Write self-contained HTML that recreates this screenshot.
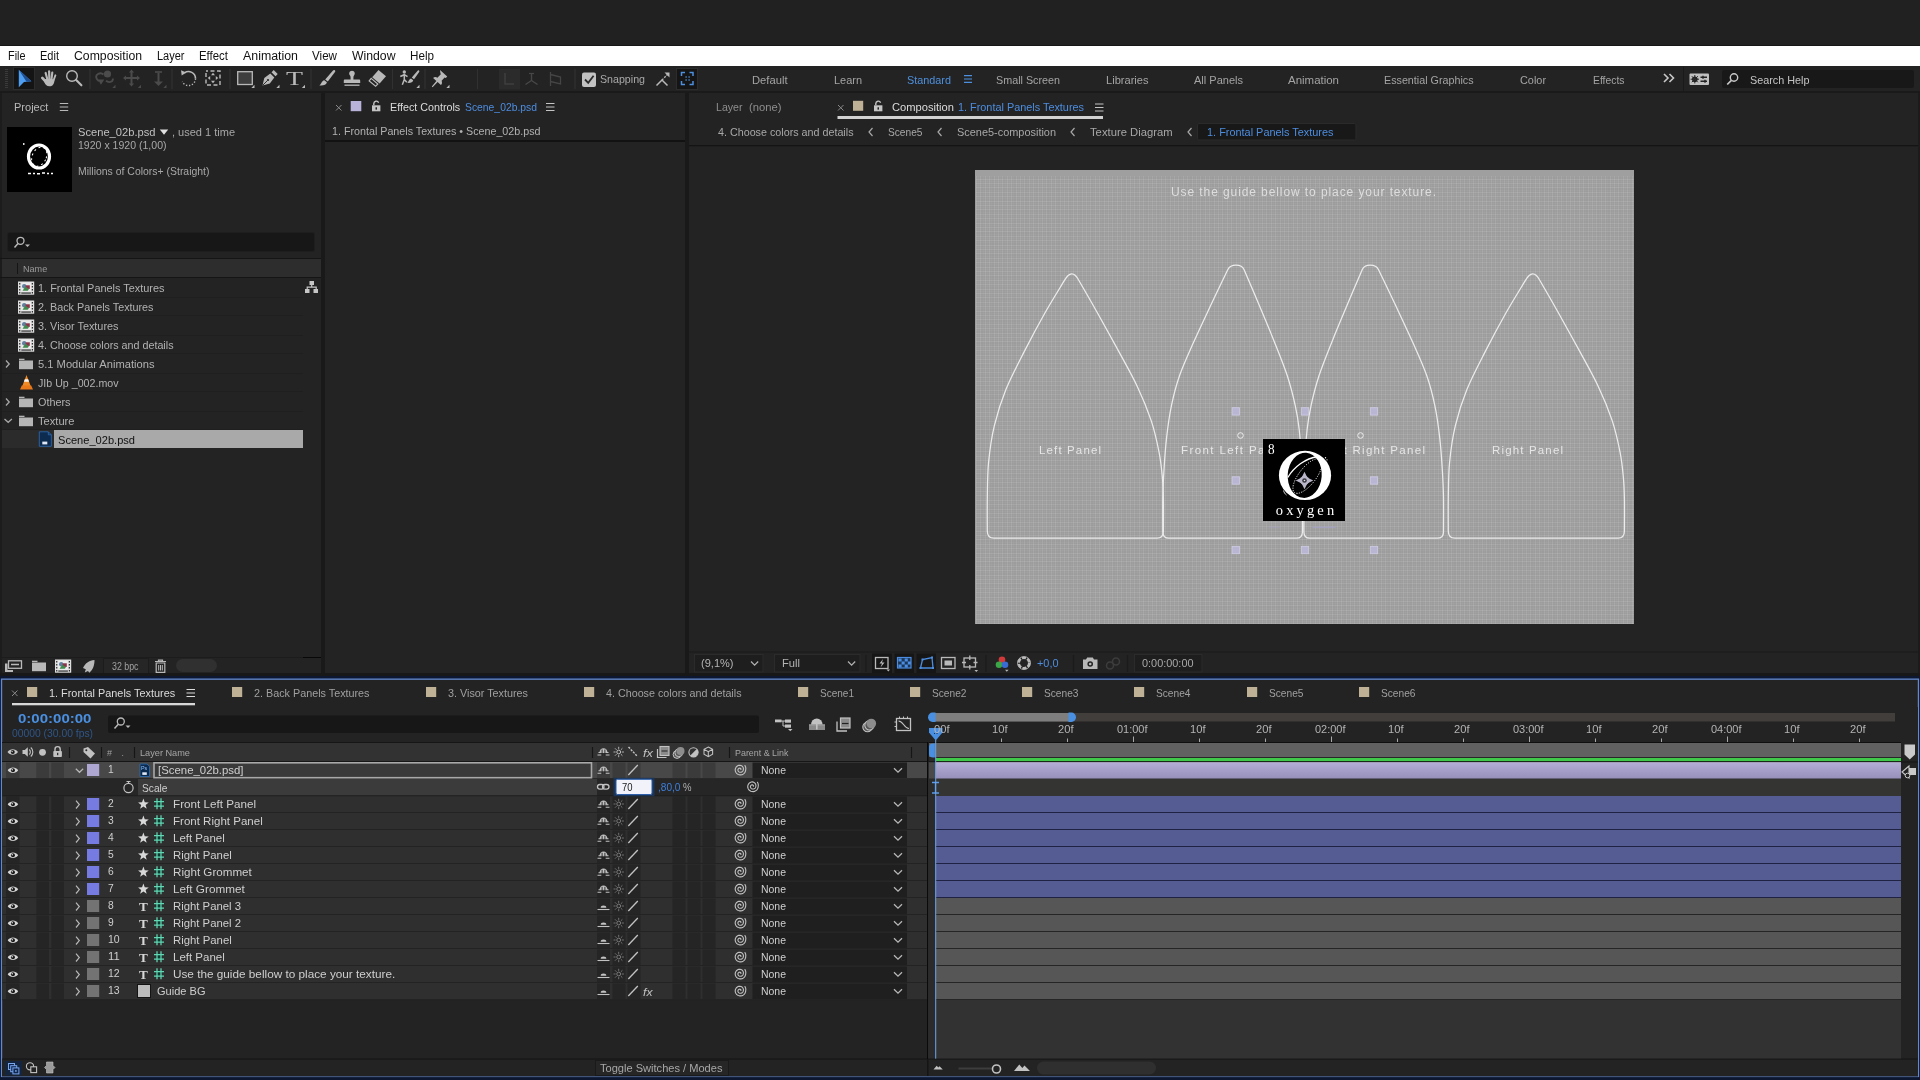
<!DOCTYPE html>
<html lang="en"><head><meta charset="utf-8"><title>After Effects</title>
<style>
html,body{margin:0;padding:0;background:#232323;}
body{width:1920px;height:1080px;overflow:hidden;position:relative;font-family:"Liberation Sans",sans-serif;}
#app{position:absolute;left:0;top:0;width:1920px;height:1080px;overflow:hidden;will-change:transform;}
.r{position:absolute;display:block;}
.t{position:absolute;white-space:pre;transform-origin:0 50%;display:block;}
</style></head>
<body>
<div id="app">
<!-- sec_top -->
<div class="r" style="left:0px;top:0px;width:1920px;height:46px;background:#212121;"></div>
<div class="r" style="left:0px;top:45px;width:1920px;height:1px;background:#161616;"></div>
<div class="r" style="left:0px;top:46px;width:1920px;height:20px;background:#ffffff;"></div>
<span class="t" style="left:7.50px;top:50px;font-size:12px;line-height:12px;color:#111;transform:scaleX(0.9050);">File</span>
<span class="t" style="left:39.50px;top:50px;font-size:12px;line-height:12px;color:#111;transform:scaleX(0.9189);">Edit</span>
<span class="t" style="left:73.50px;top:50px;font-size:12px;line-height:12px;color:#111;transform:scaleX(1.0195);">Composition</span>
<span class="t" style="left:156.50px;top:50px;font-size:12px;line-height:12px;color:#111;transform:scaleX(0.9161);">Layer</span>
<span class="t" style="left:198.50px;top:50px;font-size:12px;line-height:12px;color:#111;transform:scaleX(0.9520);">Effect</span>
<span class="t" style="left:242.50px;top:50px;font-size:12px;line-height:12px;color:#111;transform:scaleX(1.0307);">Animation</span>
<span class="t" style="left:312.00px;top:50px;font-size:12px;line-height:12px;color:#111;transform:scaleX(0.9692);">View</span>
<span class="t" style="left:351.50px;top:50px;font-size:12px;line-height:12px;color:#111;transform:scaleX(1.0192);">Window</span>
<span class="t" style="left:409.50px;top:50px;font-size:12px;line-height:12px;color:#111;transform:scaleX(0.9725);">Help</span>
<div class="r" style="left:0px;top:66px;width:1920px;height:26px;background:#232323;"></div>
<div class="r" style="left:0px;top:90.5px;width:1920px;height:2px;background:#1a1a1a;"></div>
<svg class="r" style="left:0;top:0" width="1920" height="93" viewBox="0 0 1920 93"><path d="M5 69.5h3M5 71.5h3M5 73.5h3M5 75.5h3M5 77.5h3M5 79.5h3M5 81.5h3M5 83.5h3M5 85.5h3M5 87.5h3" stroke="#3a3a3a" stroke-width="1"/><rect x="13.5" y="67.5" width="21" height="22" fill="#141414" stroke="#2c2c2c"/><path d="M18.8 69.8L31.4 81.2L24 82L18.8 87.2Z" fill="#4d9df1"/><path d="M18.8 69.8L31.4 81.2L26.5 81.7Z" fill="#1f4e8f"/><g stroke="#b9b9b9" stroke-linecap="round" fill="none"><path d="M42.300 77.900L47 83" stroke-width="2.700"/><path d="M45.600 72.900L47.700 80.500" stroke-width="2.100"/><path d="M49.100 71.300L49.400 80.500" stroke-width="2.200"/><path d="M52.300 72.500L51.300 80.500" stroke-width="2.100"/><path d="M55.400 75.300L53 82" stroke-width="1.900"/></g><path d="M45 79.300C47 78.500 54.300 78.300 54.300 80.500C54.300 84 52.500 86.300 49.500 86.300C46.500 86.300 45.200 84.300 44.300 82Z" fill="#b9b9b9"/><circle cx="72" cy="76" r="5.300" fill="none" stroke="#b9b9b9" stroke-width="1.400"/><path d="M76.200 80L81.400 85.300" stroke="#b9b9b9" stroke-width="2.100" stroke-linecap="round"/><path d="M90 69V89" stroke="#313131" stroke-width="1.2"/><path d="M172 69V89" stroke="#313131" stroke-width="1.2"/><path d="M230 69V89" stroke="#313131" stroke-width="1.2"/><path d="M311 69V89" stroke="#313131" stroke-width="1.2"/><path d="M392.5 69V89" stroke="#313131" stroke-width="1.2"/><path d="M425 69V89" stroke="#313131" stroke-width="1.2"/><path d="M477.5 69V89" stroke="#313131" stroke-width="1.2"/><path d="M575 69V89" stroke="#313131" stroke-width="1.2"/><circle cx="107.5" cy="74" r="3.6" fill="#4b4b4b"/><path d="M103.5 74.5a4.2 3.8 0 1 0 -1.5 6.200M101 83l-1.500-2.800l3.200 .2Z M106 80.800c2.500 2 7 1.800 7-2.300" fill="none" stroke="#4b4b4b" stroke-width="1.8"/><path d="M115.5 84.8V88H112.3Z" fill="#4b4b4b"/><path d="M131.5 71v14M124.5 78h14" stroke="#4b4b4b" stroke-width="2"/><path d="M131.5 69.500l2.600 3h-5.200ZM131.500 86.500l2.600-3h-5.200ZM123 78l3-2.600v5.200ZM140 78l-3-2.600v5.200Z" fill="#4b4b4b"/><path d="M141 84.8V88H137.8Z" fill="#4b4b4b"/><path d="M158.5 73v9" stroke="#4b4b4b" stroke-width="2"/><path d="M155 72h7" stroke="#4b4b4b" stroke-width="1.600"/><path d="M158.500 86l4.500-4.500h-9Z" fill="#4b4b4b"/><path d="M166.5 84.8V88H163.3Z" fill="#4b4b4b"/><path d="M184.500 72.800a7 7 0 0 1 11 5.800" fill="none" stroke="#b9b9b9" stroke-width="1.600"/><path d="M195.500 78.600a7 7 0 0 1 -13.200 3.200" fill="none" stroke="#b9b9b9" stroke-width="1.400" stroke-dasharray="1.300 1.700"/><path d="M181 70.200l.7 5.200l4.600-2.800Z" fill="#b9b9b9"/><rect x="206" y="71" width="14" height="14" fill="none" stroke="#b9b9b9" stroke-width="1.400" stroke-dasharray="4 2.500" stroke-dashoffset="2"/><path d="M213 72.800l2 2.400h-4ZM213 83.200l2-2.400h-4ZM207.800 78l2.400-2v4ZM218.200 78l-2.400-2v4Z" fill="#b9b9b9"/><rect x="237.700" y="71.700" width="14.600" height="12.800" fill="#3e3e3e" stroke="#b9b9b9" stroke-width="1.300"/><path d="M254.5 84.8V88H251.3Z" fill="#b9b9b9"/><path d="M262.500 85.500l1.800-7.500l6-4.500l4 4l-4.500 6Z" fill="#b9b9b9"/><path d="M271.500 72.300l2.200-2.200l4 4l-2.200 2.200Z" fill="#b9b9b9"/><path d="M263 85l4.300-4.300" stroke="#232323" stroke-width=".9"/><circle cx="268" cy="80" r="1.100" fill="#232323"/><path d="M279.5 84.8V88H276.3Z" fill="#b9b9b9"/><path d="M334.800 70.200c.8.600.5 1.400 0 2.100l-7 9.200l-2.600-2l7.600-8.800c.6-.700 1.300-1 2-.5Z" fill="#b9b9b9"/><path d="M324.300 80.300l2.600 2c-.500 2.800-3.700 3.600-7.600 3.200c2-1.200 2.200-4.600 5-5.200Z" fill="#b9b9b9"/><path d="M350 75.500c-1.600-1.700-.7-4.700 2-4.700s3.600 3 2 4.700c-.500.600-.600 1.500-.600 2.500v1.500h5.600c.8 0 1.200.4 1.200 1.200v2.300h-16.400v-2.300c0-.8.400-1.200 1.200-1.200h5.600V78c0-1-.1-1.900-.6-2.500Z" fill="#b9b9b9"/><path d="M344.500 85.200h15" stroke="#b9b9b9" stroke-width="1.300"/><path d="M378.500 70l7.500 6.200l-6.400 7.300l-7.400-6.300Z" fill="#b9b9b9"/><path d="M371.200 78.400l6.600 5.600l-2.200 2.300l-6.400-5.400Z" fill="none" stroke="#b9b9b9" stroke-width="1.200"/><circle cx="404.300" cy="72" r="1.700" fill="#b9b9b9"/><path d="M404.300 74.200v5.300M400.300 76.500l4-1.800l3.200 2M404.300 79.500l-2 5.300M404.300 79.500l2.500 2.800" fill="none" stroke="#b9b9b9" stroke-width="1.500"/><path d="M419 70.500c.6.500.4 1.200 0 1.800l-5 7l-2.200-1.700l5.600-6.700c.5-.600 1-.8 1.600-.4Z" fill="#b9b9b9"/><path d="M411 78.500l2.200 1.700c-.4 2.300-3 3-6 2.600c1.600-1 1.700-3.800 3.800-4.300Z" fill="#b9b9b9"/><path d="M419.5 84.8V88H416.3Z" fill="#b9b9b9"/><path d="M440 70l7.200 6.500l-1.400 1.400l-1.200-.5l-3 3.400c.7 1.700.5 3.200-.7 4.300l-3.300-3l-5 5.200l-.8-.7l4.600-5.600l-3.300-3c1.200-1.100 2.700-1.200 4.300-.3l3.400-3.400l-.4-1.300Z" fill="#b9b9b9"/><path d="M449.5 84.8V88H446.3Z" fill="#b9b9b9"/><rect x="499" y="69" width="21" height="20.500" fill="#2b2b2b"/><path d="M505 73v11h9" stroke="#3f3f3f" stroke-width="1.500" fill="none"/><path d="M531.500 73v7.500l-6 4M531.500 80.500l6 4" stroke="#474747" stroke-width="1.400" fill="none"/><path d="M529 73.500h5" stroke="#474747" stroke-width="1.200"/><path d="M550.500 72v14M550.500 74.500l10 2.500v7l-10-2.500" stroke="#454545" stroke-width="1.300" fill="none"/><rect x="582" y="72.600" width="14" height="14.400" rx="2" fill="#c2c2c2"/><path d="M585 79.500l3.200 3.300l5.400-7" fill="none" stroke="#2a2a2a" stroke-width="1.800"/><path d="M656.500 85.500l5.500-5.500l5.500 5.500" fill="none" stroke="#b9b9b9" stroke-width="1.500"/><path d="M662 80l6-6" stroke="#b9b9b9" stroke-width="1.300" stroke-dasharray="2 1.200"/><path d="M669.500 72.500v5l-5-5Z" fill="#b9b9b9"/><rect x="676.500" y="68.500" width="21" height="21" fill="#151515" stroke="#2c2c2c"/><path d="M681.500 76v-3.500h3.500M689.500 72.500h3.500v3.500M693 81v3.500h-3.500M685 84.500h-3.500v-3.500" fill="none" stroke="#4d8fe0" stroke-width="1.500"/><path d="M685.500 77h1.200M688.500 77h1.200M685.500 80h1.200M688.500 80h1.200" stroke="#4d8fe0" stroke-width="1.300"/></svg>
<span class="t" style="left:286.20px;top:69px;font-size:19.5px;line-height:19.5px;color:#b9b9b9;font-family:'Liberation Serif',serif;font-weight:400;transform:scaleX(1.4272);">T</span>
<svg class="r" style="left:300px;top:84px" width="6" height="6" viewBox="0 0 6 6"><path d="M5 .8V4H1.800Z" fill="#b9b9b9"/></svg>
<span class="t" style="left:600.00px;top:74px;font-size:11px;line-height:11px;color:#a9a9a9;transform:scaleX(0.9680);">Snapping</span>
<span class="t" style="left:752.00px;top:75px;font-size:11px;line-height:11px;color:#a4a4a4;transform:scaleX(1.0186);">Default</span>
<span class="t" style="left:834.00px;top:75px;font-size:11px;line-height:11px;color:#a4a4a4;transform:scaleX(0.9952);">Learn</span>
<span class="t" style="left:996.00px;top:75px;font-size:11px;line-height:11px;color:#a4a4a4;transform:scaleX(0.9784);">Small Screen</span>
<span class="t" style="left:1106.00px;top:75px;font-size:11px;line-height:11px;color:#a4a4a4;transform:scaleX(1.0075);">Libraries</span>
<span class="t" style="left:1194.00px;top:75px;font-size:11px;line-height:11px;color:#a4a4a4;transform:scaleX(1.0017);">All Panels</span>
<span class="t" style="left:1288.00px;top:75px;font-size:11px;line-height:11px;color:#a4a4a4;transform:scaleX(1.0426);">Animation</span>
<span class="t" style="left:1384.00px;top:75px;font-size:11px;line-height:11px;color:#a4a4a4;transform:scaleX(0.9759);">Essential Graphics</span>
<span class="t" style="left:1520.00px;top:75px;font-size:11px;line-height:11px;color:#a4a4a4;transform:scaleX(0.9891);">Color</span>
<span class="t" style="left:1593.00px;top:75px;font-size:11px;line-height:11px;color:#a4a4a4;transform:scaleX(0.9424);">Effects</span>
<span class="t" style="left:907.00px;top:75px;font-size:11px;line-height:11px;color:#4e8fdd;transform:scaleX(0.9856);">Standard</span>
<svg class="r" style="left:963px;top:74px" width="10" height="10" viewBox="0 0 10 10"><path d="M1 1.700h8M1 5h8M1 8.300h8" stroke="#4e8fdd" stroke-width="1.200"/></svg>
<svg class="r" style="left:1662px;top:72px" width="14" height="12" viewBox="0 0 14 12"><path d="M2 2l4 4l-4 4M7.500 2l4 4l-4 4" fill="none" stroke="#c8c8c8" stroke-width="1.600"/></svg>
<div class="r" style="left:1683px;top:67px;width:1px;height:24px;background:#1a1a1a;"></div>
<svg class="r" style="left:1689px;top:73px" width="21" height="13" viewBox="0 0 21 13"><rect x=".5" y=".5" width="19.500" height="11.500" rx="1" fill="#c0c0c0"/><circle cx="5.800" cy="6.200" r="2.800" fill="#232323"/><circle cx="5.800" cy="6.200" r="1.100" fill="#c0c0c0"/><path d="M5.800 2v8.400M1.600 6.200h8.400M2.800 3.200l6 6M8.800 3.200l-6 6" stroke="#232323" stroke-width="1"/><path d="M11.500 4.200h6.500M11.500 8.200h6.500" stroke="#232323" stroke-width="1.500"/><path d="M14 2.700v3M16 6.700v3" stroke="#232323" stroke-width="1.400"/></svg>
<div class="r" style="left:1722px;top:70px;width:192px;height:18px;background:#181818;border-radius:2px;"></div>
<svg class="r" style="left:1726px;top:72px" width="14" height="14" viewBox="0 0 14 14"><circle cx="8" cy="5.500" r="3.700" fill="none" stroke="#c8c8c8" stroke-width="1.400"/><path d="M5.400 8.300L1.200 12.500" stroke="#c8c8c8" stroke-width="1.700"/></svg>
<span class="t" style="left:1750.00px;top:75px;font-size:11px;line-height:11px;color:#c4c4c4;transform:scaleX(0.9829);">Search Help</span>
<!-- sec_project -->
<div class="r" style="left:0px;top:92.5px;width:321px;height:580.5px;background:#232323;"></div>
<div class="r" style="left:321px;top:92.5px;width:4px;height:580.5px;background:#191919;"></div>
<div class="r" style="left:0px;top:92.5px;width:2px;height:580.5px;background:#1c1c1c;"></div>
<span class="t" style="left:14.30px;top:102px;font-size:11px;line-height:11px;color:#b9b9b9;transform:scaleX(1.0019);">Project</span>
<svg class="r" style="left:59px;top:102px" width="10" height="10" viewBox="0 0 10 10"><path d="M.8 1.500h8.400M.8 5h8.400M.8 8.500h8.400" stroke="#b9b9b9" stroke-width="1.200"/></svg>
<div class="r" style="left:7px;top:127px;width:65px;height:65px;background:#000;"></div>
<svg class="r" style="left:7px;top:127px" width="65" height="65" viewBox="0 0 65 65"><ellipse cx="32" cy="29.500" rx="10.500" ry="11.500" fill="none" stroke="#fff" stroke-width="3.200"/><ellipse cx="32.500" cy="29.500" rx="7" ry="10" fill="none" stroke="#fff" stroke-width="1" stroke-dasharray="2 3" transform="rotate(25 32 29)"/><path d="M21 46.500h3M26 46.500h2M30 46.800h3M35 46h3M40 46.500h2M44 46.500h2" stroke="#fff" stroke-width="1.400"/><path d="M16 16h1.500v2H16Z" fill="#ddd"/></svg>
<span class="t" style="left:78.00px;top:127px;font-size:11px;line-height:11px;color:#c0c0c0;transform:scaleX(1.0137);">Scene_02b.psd</span>
<svg class="r" style="left:159px;top:128px" width="10" height="8" viewBox="0 0 10 8"><path d="M.8 1.500h8.400L5 6.800Z" fill="#e0e0e0"/></svg>
<span class="t" style="left:172.00px;top:127px;font-size:11px;line-height:11px;color:#a8a8a8;transform:scaleX(1.0004);">, used 1 time</span>
<span class="t" style="left:77.50px;top:140px;font-size:11px;line-height:11px;color:#a8a8a8;transform:scaleX(0.9584);">1920 x 1920 (1,00)</span>
<span class="t" style="left:77.50px;top:166px;font-size:11px;line-height:11px;color:#a8a8a8;transform:scaleX(0.9497);">Millions of Colors+ (Straight)</span>
<div class="r" style="left:8px;top:233px;width:306px;height:18px;background:#171717;border-radius:2px;box-shadow:0 0 0 1px #1e1e1e;"></div>
<svg class="r" style="left:13px;top:235px" width="20" height="14" viewBox="0 0 20 14"><circle cx="7.500" cy="5.800" r="3.500" fill="none" stroke="#b9b9b9" stroke-width="1.300"/><path d="M5 8.500L1.500 12.500" stroke="#b9b9b9" stroke-width="1.500"/><path d="M12 9.500h5l-2.500 2.500Z" fill="#b9b9b9"/></svg>
<div class="r" style="left:0px;top:258px;width:321px;height:1px;background:#151515;"></div>
<div class="r" style="left:2px;top:259px;width:319px;height:18px;background:#2d2d2d;"></div>
<div class="r" style="left:0px;top:277px;width:321px;height:1px;background:#151515;"></div>
<div class="r" style="left:17px;top:263px;width:1px;height:11px;background:#151515;"></div>
<span class="t" style="left:23.30px;top:264px;font-size:9.6px;line-height:9.6px;color:#9a9a9a;transform:scaleX(0.9450);">Name</span>
<div class="r" style="left:2px;top:297px;width:301px;height:1px;background:#1f1f1f;"></div>
<span class="t" style="left:38.20px;top:283px;font-size:11px;line-height:11px;color:#b2b2b2;transform:scaleX(0.9915);">1. Frontal Panels Textures</span>
<div class="r" style="left:2px;top:315px;width:301px;height:1px;background:#1f1f1f;"></div>
<span class="t" style="left:38.20px;top:302px;font-size:11px;line-height:11px;color:#b2b2b2;transform:scaleX(0.9804);">2. Back Panels Textures</span>
<div class="r" style="left:2px;top:335px;width:301px;height:1px;background:#1f1f1f;"></div>
<span class="t" style="left:38.20px;top:321px;font-size:11px;line-height:11px;color:#b2b2b2;transform:scaleX(0.9875);">3. Visor Textures</span>
<div class="r" style="left:2px;top:353px;width:301px;height:1px;background:#1f1f1f;"></div>
<span class="t" style="left:38.20px;top:340px;font-size:11px;line-height:11px;color:#b2b2b2;transform:scaleX(0.9762);">4. Choose colors and details</span>
<div class="r" style="left:2px;top:373px;width:301px;height:1px;background:#1f1f1f;"></div>
<span class="t" style="left:38.20px;top:359px;font-size:11px;line-height:11px;color:#b2b2b2;transform:scaleX(1.0135);">5.1 Modular Animations</span>
<div class="r" style="left:2px;top:391px;width:301px;height:1px;background:#1f1f1f;"></div>
<span class="t" style="left:38.20px;top:378px;font-size:11px;line-height:11px;color:#b2b2b2;transform:scaleX(0.9681);">JIb Up _002.mov</span>
<div class="r" style="left:2px;top:411px;width:301px;height:1px;background:#1f1f1f;"></div>
<span class="t" style="left:38.20px;top:397px;font-size:11px;line-height:11px;color:#b2b2b2;transform:scaleX(0.9845);">Others</span>
<div class="r" style="left:2px;top:429px;width:301px;height:1px;background:#1f1f1f;"></div>
<span class="t" style="left:38.20px;top:416px;font-size:11px;line-height:11px;color:#b2b2b2;transform:scaleX(1.0119);">Texture</span>
<div class="r" style="left:2px;top:430px;width:52px;height:18px;background:#2b2b2b;"></div>
<div class="r" style="left:54px;top:430px;width:249px;height:18px;background:#a9a9a9;"></div>
<span class="t" style="left:57.50px;top:435px;font-size:11px;line-height:11px;color:#111;transform:scaleX(1.0072);">Scene_02b.psd</span>
<span class="t" style="left:40.80px;top:434px;font-size:5.5px;line-height:5.5px;color:#9cc8f8;transform:scaleX(1.0127);">Ps</span>
<svg class="r" style="left:0;top:0" width="330" height="680" viewBox="0 0 330 680"><g transform="translate(18 281.5)"><rect x="0" y="0" width="16.200" height="13.200" fill="#dedede"/><rect x="1.1" y="1.4" width="1.300" height="1.700" rx=".5" fill="#1c1c1c"/><rect x="1.1" y="4.4" width="1.300" height="1.700" rx=".5" fill="#1c1c1c"/><rect x="1.1" y="7.4" width="1.300" height="1.700" rx=".5" fill="#1c1c1c"/><rect x="1.1" y="10.4" width="1.300" height="1.700" rx=".5" fill="#1c1c1c"/><rect x="13.7" y="1.4" width="1.300" height="1.700" rx=".5" fill="#1c1c1c"/><rect x="13.7" y="4.4" width="1.300" height="1.700" rx=".5" fill="#1c1c1c"/><rect x="13.7" y="7.4" width="1.300" height="1.700" rx=".5" fill="#1c1c1c"/><rect x="13.7" y="10.4" width="1.300" height="1.700" rx=".5" fill="#1c1c1c"/><rect x="3.300" y="1" width="9.600" height="9.300" fill="#ececec"/><circle cx="6.200" cy="4.800" r="2.200" fill="#5f7f9f"/><rect x="7.600" y="3.800" width="4.200" height="3.600" fill="#8c3347"/><path d="M4.500 9.300l3-4.300l3.400 3l-1.200 1.300Z" fill="#3f8a4c"/><rect x="3.300" y="11" width="9.600" height="1.100" fill="#222"/></g><g transform="translate(18 300.5)"><rect x="0" y="0" width="16.200" height="13.200" fill="#dedede"/><rect x="1.1" y="1.4" width="1.300" height="1.700" rx=".5" fill="#1c1c1c"/><rect x="1.1" y="4.4" width="1.300" height="1.700" rx=".5" fill="#1c1c1c"/><rect x="1.1" y="7.4" width="1.300" height="1.700" rx=".5" fill="#1c1c1c"/><rect x="1.1" y="10.4" width="1.300" height="1.700" rx=".5" fill="#1c1c1c"/><rect x="13.7" y="1.4" width="1.300" height="1.700" rx=".5" fill="#1c1c1c"/><rect x="13.7" y="4.4" width="1.300" height="1.700" rx=".5" fill="#1c1c1c"/><rect x="13.7" y="7.4" width="1.300" height="1.700" rx=".5" fill="#1c1c1c"/><rect x="13.7" y="10.4" width="1.300" height="1.700" rx=".5" fill="#1c1c1c"/><rect x="3.300" y="1" width="9.600" height="9.300" fill="#ececec"/><circle cx="6.200" cy="4.800" r="2.200" fill="#5f7f9f"/><rect x="7.600" y="3.800" width="4.200" height="3.600" fill="#8c3347"/><path d="M4.500 9.300l3-4.300l3.400 3l-1.200 1.300Z" fill="#3f8a4c"/><rect x="3.300" y="11" width="9.600" height="1.100" fill="#222"/></g><g transform="translate(18 319.5)"><rect x="0" y="0" width="16.200" height="13.200" fill="#dedede"/><rect x="1.1" y="1.4" width="1.300" height="1.700" rx=".5" fill="#1c1c1c"/><rect x="1.1" y="4.4" width="1.300" height="1.700" rx=".5" fill="#1c1c1c"/><rect x="1.1" y="7.4" width="1.300" height="1.700" rx=".5" fill="#1c1c1c"/><rect x="1.1" y="10.4" width="1.300" height="1.700" rx=".5" fill="#1c1c1c"/><rect x="13.7" y="1.4" width="1.300" height="1.700" rx=".5" fill="#1c1c1c"/><rect x="13.7" y="4.4" width="1.300" height="1.700" rx=".5" fill="#1c1c1c"/><rect x="13.7" y="7.4" width="1.300" height="1.700" rx=".5" fill="#1c1c1c"/><rect x="13.7" y="10.4" width="1.300" height="1.700" rx=".5" fill="#1c1c1c"/><rect x="3.300" y="1" width="9.600" height="9.300" fill="#ececec"/><circle cx="6.200" cy="4.800" r="2.200" fill="#5f7f9f"/><rect x="7.600" y="3.800" width="4.200" height="3.600" fill="#8c3347"/><path d="M4.500 9.300l3-4.300l3.400 3l-1.200 1.300Z" fill="#3f8a4c"/><rect x="3.300" y="11" width="9.600" height="1.100" fill="#222"/></g><g transform="translate(18 338.5)"><rect x="0" y="0" width="16.200" height="13.200" fill="#dedede"/><rect x="1.1" y="1.4" width="1.300" height="1.700" rx=".5" fill="#1c1c1c"/><rect x="1.1" y="4.4" width="1.300" height="1.700" rx=".5" fill="#1c1c1c"/><rect x="1.1" y="7.4" width="1.300" height="1.700" rx=".5" fill="#1c1c1c"/><rect x="1.1" y="10.4" width="1.300" height="1.700" rx=".5" fill="#1c1c1c"/><rect x="13.7" y="1.4" width="1.300" height="1.700" rx=".5" fill="#1c1c1c"/><rect x="13.7" y="4.4" width="1.300" height="1.700" rx=".5" fill="#1c1c1c"/><rect x="13.7" y="7.4" width="1.300" height="1.700" rx=".5" fill="#1c1c1c"/><rect x="13.7" y="10.4" width="1.300" height="1.700" rx=".5" fill="#1c1c1c"/><rect x="3.300" y="1" width="9.600" height="9.300" fill="#ececec"/><circle cx="6.200" cy="4.800" r="2.200" fill="#5f7f9f"/><rect x="7.600" y="3.800" width="4.200" height="3.600" fill="#8c3347"/><path d="M4.500 9.300l3-4.300l3.400 3l-1.200 1.300Z" fill="#3f8a4c"/><rect x="3.300" y="11" width="9.600" height="1.100" fill="#222"/></g><g transform="translate(19 357.5)"><path d="M0 1.200h5.500v1.300H0Z" fill="#b5b5b5"/><rect x="0" y="3" width="14" height="8.700" fill="#b5b5b5"/></g><path d="M6 360.5l3.200 3.500l-3.200 3.500" fill="none" stroke="#a8a8a8" stroke-width="1.300"/><g transform="translate(20 375.0)"><path d="M6.500 0l4.200 11h-8.400Z" fill="#f08a24"/><path d="M4.800 4.300h3.400l.9 2.500h-5.200Z" fill="#f4f4f4"/><path d="M0 14.500l1.800-4h9.400l1.800 4Z" fill="#e8791a"/></g><g transform="translate(19 395.5)"><path d="M0 1.200h5.500v1.300H0Z" fill="#b5b5b5"/><rect x="0" y="3" width="14" height="8.700" fill="#b5b5b5"/></g><path d="M6 398.5l3.200 3.500l-3.200 3.500" fill="none" stroke="#a8a8a8" stroke-width="1.300"/><g transform="translate(19 414.5)"><path d="M0 1.200h5.500v1.300H0Z" fill="#b5b5b5"/><rect x="0" y="3" width="14" height="8.700" fill="#b5b5b5"/></g><path d="M4.5 419.0l3.700 3.300l3.700-3.300" fill="none" stroke="#a8a8a8" stroke-width="1.300"/><g transform="translate(39.3 431.8)"><path d="M0 0h9l3 3v11.500H0Z" fill="#0d2a4f" stroke="#2f6fb5" stroke-width=".8"/><path d="M9 0v3h3" fill="none" stroke="#2f6fb5" stroke-width=".8"/><rect x="3" y="9.800" width="5" height="2.800" fill="#dfe8f5"/></g><g transform="translate(305 281)" fill="#c6c6c6"><rect x="4.500" y="0" width="4.500" height="4"/><rect x="0" y="8" width="4.500" height="4"/><rect x="8.500" y="8" width="4.500" height="4"/><path d="M6.700 4v2.500M2.200 8V6.200h9V8" stroke="#c6c6c6" fill="none" stroke-width="1.200"/></g></svg>
<div class="r" style="left:2px;top:657px;width:301px;height:1px;background:#1c1c1c;"></div>
<div class="r" style="left:303px;top:657px;width:18px;height:1px;background:#080808;"></div>
<svg class="r" style="left:0;top:0" width="330" height="680" viewBox="0 0 330 680"><g transform="translate(5 660)"><rect x="3.500" y=".8" width="13" height="7.500" fill="none" stroke="#b9b9b9" stroke-width="1.300"/><path d="M6 4.500h8" stroke="#b9b9b9" stroke-width="1.500"/><path d="M0 3.500h2.500v6.500h5.500v2H0Z" fill="#b9b9b9"/></g><g transform="translate(32 659.5)"><path d="M0 1.200h5.500v1.300H0Z" fill="#b9b9b9"/><rect x="0" y="3" width="14" height="8.700" fill="#b9b9b9"/></g><g transform="translate(55 659.5)"><rect x="0" y="0" width="16.200" height="13.200" fill="#dedede"/><rect x="1.1" y="1.4" width="1.300" height="1.700" rx=".5" fill="#1c1c1c"/><rect x="1.1" y="4.4" width="1.300" height="1.700" rx=".5" fill="#1c1c1c"/><rect x="1.1" y="7.4" width="1.300" height="1.700" rx=".5" fill="#1c1c1c"/><rect x="1.1" y="10.4" width="1.300" height="1.700" rx=".5" fill="#1c1c1c"/><rect x="13.7" y="1.4" width="1.300" height="1.700" rx=".5" fill="#1c1c1c"/><rect x="13.7" y="4.4" width="1.300" height="1.700" rx=".5" fill="#1c1c1c"/><rect x="13.7" y="7.4" width="1.300" height="1.700" rx=".5" fill="#1c1c1c"/><rect x="13.7" y="10.4" width="1.300" height="1.700" rx=".5" fill="#1c1c1c"/><rect x="3.300" y="1" width="9.600" height="9.300" fill="#ececec"/><circle cx="6.200" cy="4.800" r="2.200" fill="#5f7f9f"/><rect x="7.600" y="3.800" width="4.200" height="3.600" fill="#8c3347"/><path d="M4.500 9.300l3-4.300l3.400 3l-1.200 1.300Z" fill="#3f8a4c"/><rect x="3.300" y="11" width="9.600" height="1.100" fill="#222"/></g><path d="M94.500 660c-5.500.5-9.500 3.500-11.500 8l2.800 1.200l-1 3.300l3.200-1.600l1.300 1.800c3.800-3 5.200-7.500 5.200-12.700ZM82 668.500l-1 3.500" fill="#b9b9b9"/><rect x="103.500" y="658.500" width="45" height="15" fill="#262626" stroke="#1c1c1c"/><g transform="translate(155 659.500)"><path d="M0 2h11M3.500 2V.6h4V2" stroke="#b9b9b9" fill="none" stroke-width="1.200"/><path d="M1.200 3.500h8.600v9.300H1.200Z" fill="none" stroke="#b9b9b9" stroke-width="1.200"/><path d="M3.700 5.500v5.500M5.500 5.500v5.500M7.300 5.500v5.500" stroke="#b9b9b9" stroke-width="1"/></g><rect x="176" y="659" width="41" height="13" rx="6.500" fill="#303030"/></svg>
<span class="t" style="left:112.00px;top:662px;font-size:10.2px;line-height:10.2px;color:#a0a0a0;transform:scaleX(0.8653);">32 bpc</span>
<!-- sec_fx -->
<div class="r" style="left:325px;top:92.5px;width:360px;height:580.5px;background:#232323;"></div>
<div class="r" style="left:685px;top:92.5px;width:4px;height:580.5px;background:#191919;"></div>
<svg class="r" style="left:0;top:0" width="700" height="150" viewBox="0 0 700 150"><path d="M336 105l5.500 5.500M341.5 105l-5.500 5.500" stroke="#8a8a8a" stroke-width="1"/><rect x="350.700" y="101" width="10.600" height="10.200" fill="#b9b3d9"/><g transform="translate(372 100.3)"><path d="M1.800 5V3.200a2.500 2.500 0 0 1 4.800-.8" fill="none" stroke="#c4c4c4" stroke-width="1.400"/><rect x="0" y="5" width="8.400" height="6" fill="#c4c4c4"/><rect x="3.500" y="7" width="1.500" height="2.300" fill="#232323"/></g><path d="M546 103.5h8.500M546 107.0h8.500M546 110.5h8.500" stroke="#c4c4c4" stroke-width="1.200"/></svg>
<span class="t" style="left:390.30px;top:102px;font-size:11px;line-height:11px;color:#dcdcdc;transform:scaleX(0.9758);">Effect Controls</span>
<span class="t" style="left:465.00px;top:102px;font-size:11px;line-height:11px;color:#4d8de0;transform:scaleX(0.9418);">Scene_02b.psd</span>
<span class="t" style="left:331.50px;top:126px;font-size:11px;line-height:11px;color:#b2b2b2;transform:scaleX(0.9743);">1. Frontal Panels Textures • Scene_02b.psd</span>
<div class="r" style="left:325px;top:140px;width:360px;height:1.5px;background:#121212;"></div>
<!-- sec_comp -->
<div class="r" style="left:689px;top:92.5px;width:1231px;height:580.5px;background:#232323;"></div>
<svg class="r" style="left:0;top:0" width="1920" height="680" viewBox="0 0 1920 680"><path d="M838 105l5.500 5.500M843.5 105l-5.500 5.500" stroke="#8a8a8a" stroke-width="1"/><rect x="853" y="100.800" width="10.200" height="10" fill="#bfb196"/><g transform="translate(874 100.3)"><path d="M1.800 5V3.200a2.500 2.500 0 0 1 4.800-.8" fill="none" stroke="#c4c4c4" stroke-width="1.400"/><rect x="0" y="5" width="8.400" height="6" fill="#c4c4c4"/><rect x="3.500" y="7" width="1.500" height="2.300" fill="#232323"/></g><path d="M1095 104h8.500M1095 107.5h8.500M1095 111h8.500" stroke="#c4c4c4" stroke-width="1.200"/><rect x="837.500" y="116" width="265.500" height="3" fill="#d2d2d2"/><path d="M872.5 128l-3.500 4l3.500 4" fill="none" stroke="#a8a8a8" stroke-width="1.200"/><path d="M941.5 128l-3.500 4l3.500 4" fill="none" stroke="#a8a8a8" stroke-width="1.200"/><path d="M1074.5 128l-3.500 4l3.500 4" fill="none" stroke="#a8a8a8" stroke-width="1.200"/><path d="M1191.5 128l-3.500 4l3.500 4" fill="none" stroke="#a8a8a8" stroke-width="1.200"/><rect x="1197.500" y="123.500" width="158.500" height="16.500" fill="#181818" stroke="#2a2a2a" rx="1.500"/><rect x="689" y="145" width="1231" height="1.300" fill="#141414"/><rect x="689" y="651.500" width="1231" height="1" fill="#1b1b1b"/><rect x="694.500" y="654.500" width="68.500" height="17.500" fill="#1e1e1e" stroke="#2b2b2b"/><path d="M751 661.5l3.600 3.600l3.600-3.600" fill="none" stroke="#b0b0b0" stroke-width="1.300"/><rect x="774.500" y="654.500" width="85.500" height="17.500" fill="#1e1e1e" stroke="#2b2b2b"/><path d="M848 661.5l3.600 3.600l3.600-3.600" fill="none" stroke="#b0b0b0" stroke-width="1.300"/><path d="M866 655v17M986 655v17M1073.500 655v17M1127.500 655v17" stroke="#1b1b1b" stroke-width="1.200"/><rect x="872" y="653.500" width="20" height="19.500" fill="#161616"/><rect x="894.5" y="653.500" width="19.5" height="19.500" fill="#161616"/><rect x="916.5" y="653.500" width="19.5" height="19.500" fill="#161616"/><rect x="875.500" y="657.500" width="12.500" height="11" fill="none" stroke="#b9b9b9" stroke-width="1.300"/><path d="M883 659l-3.500 4.500h2.500l-1.500 4l4-5h-2.500Z" fill="#b9b9b9"/><path d="M886.500 669.500h3.600l-1.800 2Z" fill="#b9b9b9"/><rect x="897.500" y="657.500" width="13.500" height="10.500" fill="#1b3657" stroke="#4b8de0" stroke-width="1.200"/><rect x="898.5" y="658.5" width="3.100" height="3" fill="#4b8de0"/><rect x="898.5" y="664.5" width="3.100" height="3" fill="#4b8de0"/><rect x="901.6" y="661.5" width="3.100" height="3" fill="#4b8de0"/><rect x="904.7" y="658.5" width="3.100" height="3" fill="#4b8de0"/><rect x="904.7" y="664.5" width="3.100" height="3" fill="#4b8de0"/><rect x="907.8" y="661.5" width="3.100" height="3" fill="#4b8de0"/><path d="M920.500 668l2-8.500l9.500-2l1 10.500Z" fill="none" stroke="#4b8de0" stroke-width="1.300"/><path d="M919.500 667h2v2h-2ZM921.500 658.500h2v2h-2ZM931 656.500h2v2h-2ZM932 667h2v2h-2Z" fill="#4b8de0"/><rect x="941.500" y="657.500" width="13.500" height="11" fill="none" stroke="#b9b9b9" stroke-width="1.300"/><rect x="944.500" y="660.500" width="7.500" height="5" fill="#b9b9b9"/><rect x="964" y="658" width="11.500" height="9" fill="none" stroke="#b9b9b9" stroke-width="1.300"/><path d="M969.800 655.500v4.500M969.800 665v4.500M962 662.500h4M973.500 662.500h4" stroke="#b9b9b9" stroke-width="1.300"/><path d="M974.500 670h3.600l-1.800 2Z" fill="#b9b9b9"/><circle cx="1002" cy="659.700" r="3.300" fill="#d23a3a"/><circle cx="999" cy="664.700" r="3.300" fill="#3aa648"/><circle cx="1005" cy="664.700" r="3.300" fill="#3a6bd2"/><path d="M1005 669.800h3.600l-1.800 2Z" fill="#b9b9b9"/><circle cx="1024" cy="663" r="5.300" fill="none" stroke="#b9b9b9" stroke-width="2.600" stroke-dasharray="4.200 1.350"/><circle cx="1024" cy="663" r="6.500" fill="none" stroke="#b9b9b9" stroke-width=".8"/><path d="M1083 659.500h3l1.200-2h5.600l1.200 2h3.500v9.500h-14.500Z" fill="#b9b9b9"/><circle cx="1090.200" cy="664" r="2.800" fill="#232323"/><circle cx="1090.200" cy="664" r="1.300" fill="#b9b9b9"/><circle cx="1110" cy="665.500" r="3.500" fill="none" stroke="#3c3c3c" stroke-width="1.500"/><circle cx="1116" cy="661.500" r="3.500" fill="none" stroke="#3c3c3c" stroke-width="1.500"/><rect x="1134.500" y="654.500" width="67.500" height="17.500" fill="#1e1e1e" stroke="#2b2b2b"/></svg>
<div class="r" style="left:1918px;top:92.5px;width:2px;height:580.5px;background:#1b1b1b;"></div>
<span class="t" style="left:716.00px;top:102px;font-size:11px;line-height:11px;color:#8e8e8e;transform:scaleX(0.9631);">Layer</span>
<span class="t" style="left:749.00px;top:102px;font-size:11px;line-height:11px;color:#8e8e8e;transform:scaleX(1.0221);">(none)</span>
<span class="t" style="left:892.00px;top:102px;font-size:11px;line-height:11px;color:#dcdcdc;transform:scaleX(1.0141);">Composition</span>
<span class="t" style="left:958.00px;top:102px;font-size:11px;line-height:11px;color:#4d8de0;transform:scaleX(0.9876);">1. Frontal Panels Textures</span>
<span class="t" style="left:718.00px;top:127px;font-size:11px;line-height:11px;color:#a8a8a8;transform:scaleX(0.9762);">4. Choose colors and details</span>
<span class="t" style="left:888.00px;top:127px;font-size:11px;line-height:11px;color:#a8a8a8;transform:scaleX(0.9247);">Scene5</span>
<span class="t" style="left:957.00px;top:127px;font-size:11px;line-height:11px;color:#a8a8a8;transform:scaleX(0.9933);">Scene5-composition</span>
<span class="t" style="left:1090.00px;top:127px;font-size:11px;line-height:11px;color:#a8a8a8;transform:scaleX(1.0224);">Texture Diagram</span>
<span class="t" style="left:1207.00px;top:127px;font-size:11px;line-height:11px;color:#4d8de0;transform:scaleX(0.9915);">1. Frontal Panels Textures</span>
<span class="t" style="left:700.80px;top:658px;font-size:11px;line-height:11px;color:#b4b4b4;transform:scaleX(1.0031);">(9,1%)</span>
<span class="t" style="left:782.00px;top:658px;font-size:11px;line-height:11px;color:#b4b4b4;transform:scaleX(1.0155);">Full</span>
<span class="t" style="left:1037.00px;top:658px;font-size:11px;line-height:11px;color:#4d8de0;transform:scaleX(0.9901);">+0,0</span>
<span class="t" style="left:1141.80px;top:658px;font-size:11px;line-height:11px;color:#a8a8a8;transform:scaleX(0.9905);">0:00:00:00</span>
<div class="r" style="left:975px;top:170px;width:659px;height:454px;background:#9c9c9c;"></div>
<div class="r" style="left:975px;top:170px;width:659px;height:6px;background:#9f9f9f;"></div>
<div class="r" style="left:976px;top:176px;width:658px;height:448px;background-image:repeating-linear-gradient(90deg,rgba(255,255,255,.07) 0 1px,transparent 1px 4.400px),repeating-linear-gradient(0deg,rgba(255,255,255,.07) 0 1px,transparent 1px 4.400px),repeating-linear-gradient(90deg,rgba(255,255,255,.035) 0 1px,transparent 1px 2.200px),repeating-linear-gradient(0deg,rgba(255,255,255,.035) 0 1px,transparent 1px 2.200px);"></div>
<svg class="r" style="left:0;top:0" width="1920" height="680" viewBox="0 0 1920 680"><path d="M994 538.2H1157Q1163.400 538.200 1163.400 531C1163.4 525.6 1163.6 507.4 1163.4 498.5C1163.2 489.6 1163.1 485.5 1162.4 477.7C1161.7 469.9 1160.9 461.3 1159.0 451.8C1157.1 442.3 1154.8 431.4 1151.2 420.6C1147.6 409.8 1142.9 398.3 1137.5 386.9C1132.1 375.4 1125.7 364.2 1119.0 351.9C1112.3 339.6 1104.2 325.0 1097.5 313.0C1090.8 301.0 1081.8 285.5 1078.6 280.0Q1071.800 267.500 1064.300 280.600C1061.1 286.0 1051.6 301.1 1044.9 313.0C1038.2 324.9 1030.6 339.1 1024.1 351.9C1017.6 364.6 1010.9 377.2 1005.9 389.5C1000.9 401.8 997.2 413.7 994.3 425.8C991.4 437.9 989.8 450.0 988.6 462.1C987.4 474.2 987.5 487.0 987.3 498.5C987.1 510.0 987.3 525.6 987.3 531.0Q987.300 538.200 994 538.200Z" fill="none" stroke="#ececec" stroke-width="1.250" stroke-linejoin="round"/><path d="M994 538.2H1157Q1163.400 538.200 1163.400 531C1163.4 525.6 1163.6 507.4 1163.4 498.5C1163.2 489.6 1163.1 485.5 1162.4 477.7C1161.7 469.9 1160.9 461.3 1159.0 451.8C1157.1 442.3 1154.8 431.4 1151.2 420.6C1147.6 409.8 1142.9 398.3 1137.5 386.9C1132.1 375.4 1125.7 364.2 1119.0 351.9C1112.3 339.6 1104.2 325.0 1097.5 313.0C1090.8 301.0 1081.8 285.5 1078.6 280.0Q1071.800 267.500 1064.300 280.600C1061.1 286.0 1051.6 301.1 1044.9 313.0C1038.2 324.9 1030.6 339.1 1024.1 351.9C1017.6 364.6 1010.9 377.2 1005.9 389.5C1000.9 401.8 997.2 413.7 994.3 425.8C991.4 437.9 989.8 450.0 988.6 462.1C987.4 474.2 987.5 487.0 987.3 498.5C987.1 510.0 987.3 525.6 987.3 531.0Q987.300 538.200 994 538.200Z" fill="none" stroke="#ececec" stroke-width="1.250" stroke-linejoin="round" transform="translate(461 0)"/><path d="M1169 538.2H1296.500Q1302.400 538.200 1302.400 532C1302.4 526.7 1302.5 511.2 1302.4 500.0C1302.3 488.8 1302.5 476.8 1302.0 465.0C1301.5 453.2 1300.3 439.4 1299.2 429.5C1298.1 419.6 1297.2 414.2 1295.2 405.3C1293.2 396.4 1290.8 386.5 1287.3 375.8C1283.8 365.1 1278.8 353.0 1274.0 340.9C1269.2 328.8 1263.4 315.2 1258.4 303.3C1253.4 291.4 1246.4 275.1 1244.0 269.5C1242.500 265.800 1240 265.200 1236 265.200C1232 265.200 1229.700 265.800 1227.900 269.500C1225.2 275.1 1217.5 290.9 1211.7 303.3C1205.9 315.7 1198.4 331.5 1193.0 343.6C1187.6 355.7 1183.1 365.5 1179.5 375.8C1175.9 386.1 1173.7 395.0 1171.5 405.3C1169.3 415.6 1167.8 426.9 1166.6 437.6C1165.3 448.4 1164.6 460.0 1164.0 469.8C1163.4 479.6 1163.0 486.2 1162.8 496.6C1162.6 507.0 1162.8 526.1 1162.8 532.0Q1162.800 538.200 1169 538.200Z" fill="none" stroke="#ececec" stroke-width="1.250" stroke-linejoin="round"/><path d="M1169 538.2H1296.500Q1302.400 538.200 1302.400 532C1302.4 526.7 1302.5 511.2 1302.4 500.0C1302.3 488.8 1302.5 476.8 1302.0 465.0C1301.5 453.2 1300.3 439.4 1299.2 429.5C1298.1 419.6 1297.2 414.2 1295.2 405.3C1293.2 396.4 1290.8 386.5 1287.3 375.8C1283.8 365.1 1278.8 353.0 1274.0 340.9C1269.2 328.8 1263.4 315.2 1258.4 303.3C1253.4 291.4 1246.4 275.1 1244.0 269.5C1242.500 265.800 1240 265.200 1236 265.200C1232 265.200 1229.700 265.800 1227.900 269.500C1225.2 275.1 1217.5 290.9 1211.7 303.3C1205.9 315.7 1198.4 331.5 1193.0 343.6C1187.6 355.7 1183.1 365.5 1179.5 375.8C1175.9 386.1 1173.7 395.0 1171.5 405.3C1169.3 415.6 1167.8 426.9 1166.6 437.6C1165.3 448.4 1164.6 460.0 1164.0 469.8C1163.4 479.6 1163.0 486.2 1162.8 496.6C1162.6 507.0 1162.8 526.1 1162.8 532.0Q1162.800 538.200 1169 538.200Z" fill="none" stroke="#ececec" stroke-width="1.250" stroke-linejoin="round" transform="translate(2606.300 0) scale(-1 1)"/><circle cx="1240.500" cy="435.500" r="2.800" fill="none" stroke="#ececec" stroke-width="1"/><circle cx="1360.500" cy="435.500" r="2.800" fill="none" stroke="#ececec" stroke-width="1"/><rect x="1232.1" y="407.7" width="7.400" height="7.400" fill="#b9b6d4" stroke="#cfcde3" stroke-width=".8"/><rect x="1301.3" y="407.7" width="7.400" height="7.400" fill="#b9b6d4" stroke="#cfcde3" stroke-width=".8"/><rect x="1370.3" y="407.7" width="7.400" height="7.400" fill="#b9b6d4" stroke="#cfcde3" stroke-width=".8"/><rect x="1232.1" y="476.8" width="7.400" height="7.400" fill="#b9b6d4" stroke="#cfcde3" stroke-width=".8"/><rect x="1370.3" y="476.8" width="7.400" height="7.400" fill="#b9b6d4" stroke="#cfcde3" stroke-width=".8"/><rect x="1232.1" y="546.3" width="7.400" height="7.400" fill="#b9b6d4" stroke="#cfcde3" stroke-width=".8"/><rect x="1301.3" y="546.3" width="7.400" height="7.400" fill="#b9b6d4" stroke="#cfcde3" stroke-width=".8"/><rect x="1370.3" y="546.3" width="7.400" height="7.400" fill="#b9b6d4" stroke="#cfcde3" stroke-width=".8"/><rect x="1263" y="439" width="82" height="82" fill="#000"/><ellipse cx="1305" cy="475.400" rx="26.100" ry="24.600" fill="#fff"/><ellipse cx="1304.700" cy="475.300" rx="17" ry="22.600" fill="#000" transform="rotate(4 1304.700 475.300)"/><path d="M1287.800 477.500C1294 467 1305 458.500 1318 456.500" fill="none" stroke="#fff" stroke-width="1.300"/><ellipse cx="1307.500" cy="476" rx="21" ry="8.500" fill="none" stroke="#fff" stroke-width=".9" stroke-dasharray="1.100 1.400" transform="rotate(-52 1307.500 476)"/><path d="M1283.500 490.500c.5 2 1.500 3.500 3 4.500" fill="none" stroke="#fff" stroke-width=".8"/><circle cx="1325.500" cy="457.800" r=".7" fill="#fff"/><circle cx="1327" cy="459.800" r=".6" fill="#fff"/><path d="M1304.500 471.700l2.700 5.600h-5.400ZM1304.500 489.300l2.700-5.600h-5.400ZM1295.700 480.500l5.600-2.700v5.400ZM1313.300 480.500l-5.600-2.700v5.400Z" fill="#b9b6c9"/><circle cx="1304.500" cy="480.500" r="4.700" fill="#b9b6c9"/><circle cx="1304.500" cy="480.500" r="2.300" fill="#34343c"/><circle cx="1304.500" cy="480.500" r=".8" fill="#e8e8f0"/><path d="M1269 527.200h11" stroke="#a5a1cc" stroke-width="1" opacity=".5"/><path d="M1312.500 527.200h23" stroke="#a5a1cc" stroke-width="1"/></svg>
<span class="t" style="left:1275.80px;top:503px;font-size:14.5px;line-height:14.5px;color:#fff;font-family:'Liberation Serif',serif;font-weight:400;letter-spacing:3.143px;">oxygen</span>
<span class="t" style="left:1268.30px;top:443px;font-size:14px;line-height:14px;color:#fff;font-family:'Liberation Serif',serif;font-weight:400;transform:scaleX(0.9429);">8</span>
<span class="t" style="left:1171.00px;top:186px;font-size:12px;line-height:12px;color:#dedede;letter-spacing:0.910px;">Use the guide bellow to place your texture.</span>
<span class="t" style="left:1039.00px;top:445px;font-size:11.5px;line-height:11.5px;color:#e6e6e6;letter-spacing:1.134px;">Left Panel</span>
<span class="t" style="left:1492.00px;top:445px;font-size:11.5px;line-height:11.5px;color:#e6e6e6;letter-spacing:1.155px;">Right Panel</span>
<div class="r" style="left:1175px;top:440px;width:88px;height:20px;overflow:hidden"><span class="t" style="left:6.00px;top:5px;font-size:11.5px;line-height:11.5px;color:#e6e6e6;letter-spacing:1.412px;">Front Left Panel</span></div>
<div class="r" style="left:1345px;top:440px;width:90px;height:20px;overflow:hidden"><span class="t" style="left:-30.50px;top:5px;font-size:11.5px;line-height:11.5px;color:#e6e6e6;letter-spacing:1.313px;">Front Right Panel</span></div>
<!-- sec_tl -->
<div class="r" style="left:0px;top:673px;width:1920px;height:407px;background:#181818;"></div>
<div class="r" style="left:0px;top:676px;width:1920px;height:404px;background:#0d1830;"></div>
<div class="r" style="left:1px;top:679px;width:1918px;height:398px;background:#232323;"></div>
<svg class="r" style="left:0;top:670px" width="1920" height="410" viewBox="0 670 1920 410"><rect x="1.550" y="679.150" width="1916.900" height="397.300" fill="none" stroke="#6288d0" stroke-width="1.300"/></svg>
<svg class="r" style="left:0;top:678px" width="1920" height="402" viewBox="0 678 1920 402"><defs><linearGradient id="lav" x1="0" y1="0" x2="0" y2="1"><stop offset="0" stop-color="#d2cfea"/><stop offset=".08" stop-color="#b3acd4"/><stop offset="1" stop-color="#9690bb"/></linearGradient></defs><rect x="27" y="687" width="10.200" height="10" fill="#bfb196"/><rect x="232" y="687" width="10.200" height="10" fill="#bfb196"/><rect x="426" y="687" width="10.200" height="10" fill="#bfb196"/><rect x="584" y="687" width="10.200" height="10" fill="#bfb196"/><rect x="798" y="687" width="10.200" height="10" fill="#bfb196"/><rect x="910" y="687" width="10.200" height="10" fill="#bfb196"/><rect x="1022" y="687" width="10.200" height="10" fill="#bfb196"/><rect x="1134" y="687" width="10.200" height="10" fill="#bfb196"/><rect x="1247" y="687" width="10.200" height="10" fill="#bfb196"/><rect x="1359" y="687" width="10.200" height="10" fill="#bfb196"/><path d="M12 690.5l5.500 5.500M17.5 690.5l-5.500 5.500" stroke="#8a8a8a" stroke-width="1"/><path d="M186.5 689.5h8.500M186.5 693.0h8.500M186.5 696.5h8.500" stroke="#dcdcdc" stroke-width="1.200"/><rect x="12" y="703" width="183" height="2.300" fill="#d8d8d8"/><rect x="108" y="715.500" width="651" height="17.500" rx="2" fill="#171717"/><circle cx="120.800" cy="721.500" r="3.500" fill="none" stroke="#b9b9b9" stroke-width="1.300"/><path d="M118.300 724.200L114.500 728.500" stroke="#b9b9b9" stroke-width="1.500"/><path d="M125.500 725.500h5l-2.500 2.500Z" fill="#b9b9b9"/><g fill="#c2c2c2"><rect x="775" y="719.500" width="6.500" height="2.800"/><rect x="785" y="719.500" width="6" height="3.200"/><rect x="785" y="724.500" width="6" height="3.200"/><path d="M781 721h4M783 721v5h2" stroke="#c2c2c2" fill="none" stroke-width="1"/><path d="M788 729h4.500l-2.250 2.300Z"/></g><path d="M811 724.500a5.800 6 0 0 1 11.600 0Z" fill="#c2c2c2"/><rect x="809" y="725.500" width="16" height="4.500" fill="#8a8a8a"/><path d="M816.800 720.500v9" stroke="#c2c2c2" stroke-width="1.600"/><path d="M809 725h16" stroke="#c2c2c2" stroke-width="1.200"/><rect x="840.500" y="718" width="9.500" height="10" fill="#8a8a8a" stroke="#c2c2c2" stroke-width="1.200"/><path d="M837 721.500v9.500h10" fill="none" stroke="#c2c2c2" stroke-width="1.300"/><path d="M842 723.500h6.500" stroke="#232323" stroke-width="1.200"/><circle cx="867.500" cy="727" r="4.700" fill="#555" stroke="#c2c2c2" stroke-width="1.100"/><circle cx="869.500" cy="725.300" r="4.700" fill="#555" stroke="#c2c2c2" stroke-width="1.100"/><circle cx="871.300" cy="723.500" r="4.800" fill="#8d8d8d"/><rect x="896.500" y="718.500" width="14" height="12" fill="none" stroke="#c2c2c2" stroke-width="1.300"/><path d="M898.500 721c5 0 5.500 7.500 10.500 7.500" fill="none" stroke="#c2c2c2" stroke-width="1.200"/><path d="M899.500 716.500v2M903.500 716.500v2M907.500 716.500v2M894.500 722h2M894.500 726.500h2" stroke="#c2c2c2" stroke-width="1"/><rect x="2" y="742" width="925" height="1" fill="#161616"/><rect x="2" y="743" width="925" height="18" fill="#323232"/><rect x="2" y="761" width="925" height="1" fill="#161616"/><path d="M7.5 752c2.500-3.600 8-3.600 10.500 0c-2.500 3.600-8 3.600-10.500 0Z" fill="#c8c8c8"/><circle cx="12.75" cy="752" r="2" fill="#1a1a1a"/><circle cx="12.1" cy="751.4" r=".75" fill="#c8c8c8"/><path d="M22.500 750h2.300l3-2.800v9.600l-3-2.800h-2.300Z" fill="#c2c2c2"/><path d="M29.300 749.500a3.500 3.500 0 0 1 0 5M30.800 747.500a6 6 0 0 1 0 9" fill="none" stroke="#c2c2c2" stroke-width="1.100"/><circle cx="42.500" cy="752.300" r="3.400" fill="#c2c2c2"/><path d="M55 751v-1.800a2.600 2.600 0 0 1 5.200 0V751" fill="none" stroke="#c2c2c2" stroke-width="1.400"/><rect x="53.300" y="751" width="8.600" height="6" rx=".8" fill="#c2c2c2"/><rect x="57" y="752.800" width="1.300" height="2.400" fill="#323232"/><path d="M83.500 748.500l4.500-1.500l7 6.500l-4.500 5l-7-6.500Z" fill="#c2c2c2"/><circle cx="86.300" cy="750.300" r="1" fill="#2b2b2b"/><path d="M69.5 747v11" stroke="#161616" stroke-width="1.200"/><path d="M101.5 747v11" stroke="#161616" stroke-width="1.200"/><path d="M134.5 747v11" stroke="#161616" stroke-width="1.200"/><path d="M592.5 747v11" stroke="#161616" stroke-width="1.200"/><path d="M729.5 747v11" stroke="#161616" stroke-width="1.200"/><path d="M911.5 747v11" stroke="#161616" stroke-width="1.200"/><path d="M599.5 752.5a4 4.300 0 0 1 8 0Z" fill="#c2c2c2"/><path d="M597.5 755.0h4M605.5 755.0h4M598.5 752.5h10" stroke="#c2c2c2" stroke-width="1.100"/><path d="M602.1 749.5v6.500M604.9 749.5v6.500" stroke="#222" stroke-width=".9"/><circle cx="618.7" cy="752" r="1.900" fill="none" stroke="#c2c2c2" stroke-width="1"/><path d="M621.80 752.00L623.90 752.00M620.89 754.19L622.38 755.68M618.70 755.10L618.70 757.20M616.51 754.19L615.02 755.68M615.60 752.00L613.50 752.00M616.51 749.81L615.02 748.32M618.70 748.90L618.70 746.80M620.89 749.81L622.38 748.32" stroke="#c2c2c2" stroke-width=".9"/><path d="M628.500 747l9 9.500" stroke="#c2c2c2" stroke-width="1.400" stroke-dasharray="2.200 1.100"/><rect x="660" y="746.500" width="9" height="9" fill="#8a8a8a" stroke="#c2c2c2" stroke-width="1.100"/><path d="M657.500 749v8.500h9" fill="none" stroke="#c2c2c2" stroke-width="1.200"/><path d="M661.500 751h6" stroke="#2b2b2b" stroke-width="1.100"/><circle cx="677" cy="754.500" r="3.900" fill="#5a5a5a" stroke="#c2c2c2" stroke-width="1"/><circle cx="678.800" cy="752.800" r="3.900" fill="#5a5a5a" stroke="#c2c2c2" stroke-width="1"/><circle cx="680.500" cy="751" r="4" fill="#8d8d8d"/><circle cx="693.500" cy="752.300" r="4.600" fill="none" stroke="#c2c2c2" stroke-width="1.100"/><path d="M690.300 755.600a4.600 4.600 0 0 0 6.500-6.500Z" fill="#c2c2c2"/><path d="M708.300 747l4.300 2.300v5l-4.300 2.400l-4.300-2.400v-5ZM704 749.300l4.300 2.400l4.300-2.400M708.300 751.700v5" fill="none" stroke="#c2c2c2" stroke-width="1.050"/><rect x="927" y="742" width="1.300" height="317" fill="#0a0a0a"/><rect x="928.300" y="762" width="972.700" height="297" fill="#323232"/><rect x="928.300" y="762" width="7" height="297" fill="#2b2b2b"/><rect x="2" y="762" width="925" height="16.500" fill="#484848"/><rect x="2" y="778.5" width="925" height=".7" fill="#1e1e1e"/><rect x="6" y="762.5" width="13.5" height="15.500" fill="#3b3b3b"/><rect x="36.3" y="762.5" width="12.7" height="15.500" fill="#3b3b3b"/><rect x="51.3" y="762.5" width="12.7" height="15.500" fill="#3b3b3b"/><path d="M7.7 770.3c2.500-3.600 8-3.600 10.500 0c-2.500 3.600-8 3.600-10.500 0Z" fill="#d6d6d6"/><circle cx="12.95" cy="770.3" r="2" fill="#1a1a1a"/><circle cx="12.3" cy="769.6999999999999" r=".75" fill="#d6d6d6"/><path d="M75.800 768.8l3.700 3.500l3.700-3.500" fill="none" stroke="#b8b8b8" stroke-width="1.200"/><rect x="87" y="764" width="12.200" height="12" fill="#ada7d1"/><rect x="597" y="762.5" width="13" height="15.500" fill="#3b3b3b"/><rect x="612.5" y="762.5" width="13" height="15.500" fill="#3b3b3b"/><rect x="627.5" y="762.5" width="13" height="15.500" fill="#3b3b3b"/><rect x="672.5" y="762.5" width="13" height="15.500" fill="#3b3b3b"/><rect x="687.5" y="762.5" width="13" height="15.500" fill="#3b3b3b"/><rect x="702.5" y="762.5" width="13" height="15.500" fill="#3b3b3b"/><path d="M599.5 770.8a4 4.300 0 0 1 8 0Z" fill="#c2c2c2"/><path d="M597.5 773.3h4M605.5 773.3h4M598.5 770.8h10" stroke="#c2c2c2" stroke-width="1.100"/><path d="M602.1 767.8v6.500M604.9 767.8v6.500" stroke="#222" stroke-width=".9"/><path d="M628.3 775.0L637.8 765.0" stroke="#c2c2c2" stroke-width="1.300"/><path d="M744.96 765.52L745.59 766.94L745.83 768.40L745.70 769.80L745.48 771.12L744.95 772.32L744.15 773.36L743.14 774.15L741.97 774.68L740.74 774.90L739.49 774.84L738.30 774.51L737.23 773.89L736.34 773.04L735.68 772.00L735.30 770.84L735.21 769.63L735.46 768.44L735.99 767.37L736.74 766.46L737.69 765.78L738.75 765.35L739.88 765.19L740.97 765.43L741.91 765.96L742.64 766.67L743.14 767.50L743.40 768.38L743.42 769.23L743.27 770.01L743.03 770.72L742.65 771.33L742.14 771.81L741.55 772.14L740.92 772.31L740.29 772.31L739.69 772.22L739.13 772.00L738.65 771.65L738.27 771.20L738.02 770.68L737.90 770.12L737.96 769.56L738.18 769.07L738.51 768.66L738.91 768.37L739.35 768.19L739.79 768.14L740.20 768.20L740.54 768.42L740.78 768.71L740.91 769.01L740.93 769.31L740.86 769.56" fill="none" stroke="#c2c2c2" stroke-width="1.100" stroke-linecap="round" stroke-linejoin="round"/><rect x="752.500" y="762.5" width="154.500" height="15.500" fill="#1f1f1f"/><path d="M894 768.3l4 3.800l4-3.800" fill="none" stroke="#b8b8b8" stroke-width="1.300"/><g transform="translate(140 764)"><path d="M0 0h7l2.500 2.500V12.500H0Z" fill="#0d2a4f" stroke="#2f6fb5" stroke-width=".8"/><rect x="2.300" y="8.300" width="4.500" height="2.600" fill="#dfe8f5"/></g><rect x="154" y="762.8" width="437.500" height="14.900" fill="#3a3a3a" stroke="#a9a9a9" stroke-width="1.600"/><rect x="929" y="762" width="6.500" height="16.500" fill="#4a4a4a"/><rect x="935.500" y="762" width="965.500" height="16.500" fill="url(#lav)"/><rect x="2" y="796" width="925" height="16.500" fill="#2f2f2f"/><rect x="2" y="812.5" width="925" height=".7" fill="#1e1e1e"/><rect x="6" y="796.5" width="13.5" height="15.500" fill="#252525"/><rect x="36.3" y="796.5" width="12.7" height="15.500" fill="#252525"/><rect x="51.3" y="796.5" width="12.7" height="15.500" fill="#252525"/><path d="M7.7 804.3c2.500-3.600 8-3.600 10.500 0c-2.500 3.600-8 3.600-10.500 0Z" fill="#d6d6d6"/><circle cx="12.95" cy="804.3" r="2" fill="#1a1a1a"/><circle cx="12.3" cy="803.6999999999999" r=".75" fill="#d6d6d6"/><path d="M76 800.6999999999999l3.300 3.900l-3.300 3.900" fill="none" stroke="#b8b8b8" stroke-width="1.200"/><rect x="87" y="798" width="12.200" height="12" fill="#757be0"/><rect x="597" y="796.5" width="13" height="15.500" fill="#252525"/><rect x="612.5" y="796.5" width="13" height="15.500" fill="#252525"/><rect x="627.5" y="796.5" width="13" height="15.500" fill="#252525"/><rect x="672.5" y="796.5" width="13" height="15.500" fill="#252525"/><rect x="687.5" y="796.5" width="13" height="15.500" fill="#252525"/><rect x="702.5" y="796.5" width="13" height="15.500" fill="#252525"/><path d="M599.5 804.8a4 4.300 0 0 1 8 0Z" fill="#c2c2c2"/><path d="M597.5 807.3h4M605.5 807.3h4M598.5 804.8h10" stroke="#c2c2c2" stroke-width="1.100"/><path d="M602.1 801.8v6.500M604.9 801.8v6.500" stroke="#222" stroke-width=".9"/><circle cx="618.7" cy="804.0" r="1.900" fill="none" stroke="#7c7c7c" stroke-width="1"/><path d="M621.80 804.00L623.90 804.00M620.89 806.19L622.38 807.68M618.70 807.10L618.70 809.20M616.51 806.19L615.02 807.68M615.60 804.00L613.50 804.00M616.51 801.81L615.02 800.32M618.70 800.90L618.70 798.80M620.89 801.81L622.38 800.32" stroke="#7c7c7c" stroke-width=".9"/><path d="M628.3 809.0L637.8 799.0" stroke="#c2c2c2" stroke-width="1.300"/><path d="M744.96 799.52L745.59 800.94L745.83 802.40L745.70 803.80L745.48 805.12L744.95 806.32L744.15 807.36L743.14 808.15L741.97 808.68L740.74 808.90L739.49 808.84L738.30 808.51L737.23 807.89L736.34 807.04L735.68 806.00L735.30 804.84L735.21 803.63L735.46 802.44L735.99 801.37L736.74 800.46L737.69 799.78L738.75 799.35L739.88 799.19L740.97 799.43L741.91 799.96L742.64 800.67L743.14 801.50L743.40 802.38L743.42 803.23L743.27 804.01L743.03 804.72L742.65 805.33L742.14 805.81L741.55 806.14L740.92 806.31L740.29 806.31L739.69 806.22L739.13 806.00L738.65 805.65L738.27 805.20L738.02 804.68L737.90 804.12L737.96 803.56L738.18 803.07L738.51 802.66L738.91 802.37L739.35 802.19L739.79 802.14L740.20 802.20L740.54 802.42L740.78 802.71L740.91 803.01L740.93 803.31L740.86 803.56" fill="none" stroke="#c2c2c2" stroke-width="1.100" stroke-linecap="round" stroke-linejoin="round"/><rect x="752.500" y="796.5" width="154.500" height="15.500" fill="#1f1f1f"/><path d="M894 802.3l4 3.800l4-3.800" fill="none" stroke="#b8b8b8" stroke-width="1.300"/><polygon points="143.40,798.60 144.75,802.34 148.73,802.47 145.59,804.91 146.69,808.73 143.40,806.50 140.11,808.73 141.21,804.91 138.07,802.47 142.05,802.34" fill="#d8d8d8"/><rect x="155.5" y="800.3" width="7" height="7" fill="#0e3b31"/><path d="M157 798.3v11M161 798.3v11M154 801.5h10M154 806.0999999999999h10" stroke="#63d6b3" stroke-width="1.250"/><rect x="935.500" y="796" width="965.500" height="16.300" fill="#555c93"/><rect x="935.500" y="812" width="965.500" height="1" fill="#1f2242"/><rect x="2" y="813" width="925" height="16.500" fill="#2f2f2f"/><rect x="2" y="829.5" width="925" height=".7" fill="#1e1e1e"/><rect x="6" y="813.5" width="13.5" height="15.500" fill="#252525"/><rect x="36.3" y="813.5" width="12.7" height="15.500" fill="#252525"/><rect x="51.3" y="813.5" width="12.7" height="15.500" fill="#252525"/><path d="M7.7 821.3c2.500-3.600 8-3.600 10.500 0c-2.500 3.600-8 3.600-10.500 0Z" fill="#d6d6d6"/><circle cx="12.95" cy="821.3" r="2" fill="#1a1a1a"/><circle cx="12.3" cy="820.6999999999999" r=".75" fill="#d6d6d6"/><path d="M76 817.6999999999999l3.300 3.900l-3.300 3.900" fill="none" stroke="#b8b8b8" stroke-width="1.200"/><rect x="87" y="815" width="12.200" height="12" fill="#757be0"/><rect x="597" y="813.5" width="13" height="15.500" fill="#252525"/><rect x="612.5" y="813.5" width="13" height="15.500" fill="#252525"/><rect x="627.5" y="813.5" width="13" height="15.500" fill="#252525"/><rect x="672.5" y="813.5" width="13" height="15.500" fill="#252525"/><rect x="687.5" y="813.5" width="13" height="15.500" fill="#252525"/><rect x="702.5" y="813.5" width="13" height="15.500" fill="#252525"/><path d="M599.5 821.8a4 4.300 0 0 1 8 0Z" fill="#c2c2c2"/><path d="M597.5 824.3h4M605.5 824.3h4M598.5 821.8h10" stroke="#c2c2c2" stroke-width="1.100"/><path d="M602.1 818.8v6.500M604.9 818.8v6.500" stroke="#222" stroke-width=".9"/><circle cx="618.7" cy="821.0" r="1.900" fill="none" stroke="#7c7c7c" stroke-width="1"/><path d="M621.80 821.00L623.90 821.00M620.89 823.19L622.38 824.68M618.70 824.10L618.70 826.20M616.51 823.19L615.02 824.68M615.60 821.00L613.50 821.00M616.51 818.81L615.02 817.32M618.70 817.90L618.70 815.80M620.89 818.81L622.38 817.32" stroke="#7c7c7c" stroke-width=".9"/><path d="M628.3 826.0L637.8 816.0" stroke="#c2c2c2" stroke-width="1.300"/><path d="M744.96 816.52L745.59 817.94L745.83 819.40L745.70 820.80L745.48 822.12L744.95 823.32L744.15 824.36L743.14 825.15L741.97 825.68L740.74 825.90L739.49 825.84L738.30 825.51L737.23 824.89L736.34 824.04L735.68 823.00L735.30 821.84L735.21 820.63L735.46 819.44L735.99 818.37L736.74 817.46L737.69 816.78L738.75 816.35L739.88 816.19L740.97 816.43L741.91 816.96L742.64 817.67L743.14 818.50L743.40 819.38L743.42 820.23L743.27 821.01L743.03 821.72L742.65 822.33L742.14 822.81L741.55 823.14L740.92 823.31L740.29 823.31L739.69 823.22L739.13 823.00L738.65 822.65L738.27 822.20L738.02 821.68L737.90 821.12L737.96 820.56L738.18 820.07L738.51 819.66L738.91 819.37L739.35 819.19L739.79 819.14L740.20 819.20L740.54 819.42L740.78 819.71L740.91 820.01L740.93 820.31L740.86 820.56" fill="none" stroke="#c2c2c2" stroke-width="1.100" stroke-linecap="round" stroke-linejoin="round"/><rect x="752.500" y="813.5" width="154.500" height="15.500" fill="#1f1f1f"/><path d="M894 819.3l4 3.800l4-3.800" fill="none" stroke="#b8b8b8" stroke-width="1.300"/><polygon points="143.40,815.60 144.75,819.34 148.73,819.47 145.59,821.91 146.69,825.73 143.40,823.50 140.11,825.73 141.21,821.91 138.07,819.47 142.05,819.34" fill="#d8d8d8"/><rect x="155.5" y="817.3" width="7" height="7" fill="#0e3b31"/><path d="M157 815.3v11M161 815.3v11M154 818.5h10M154 823.0999999999999h10" stroke="#63d6b3" stroke-width="1.250"/><rect x="935.500" y="813" width="965.500" height="16.300" fill="#555c93"/><rect x="935.500" y="829" width="965.500" height="1" fill="#1f2242"/><rect x="2" y="830" width="925" height="16.500" fill="#2f2f2f"/><rect x="2" y="846.5" width="925" height=".7" fill="#1e1e1e"/><rect x="6" y="830.5" width="13.5" height="15.500" fill="#252525"/><rect x="36.3" y="830.5" width="12.7" height="15.500" fill="#252525"/><rect x="51.3" y="830.5" width="12.7" height="15.500" fill="#252525"/><path d="M7.7 838.3c2.500-3.600 8-3.600 10.500 0c-2.500 3.600-8 3.600-10.500 0Z" fill="#d6d6d6"/><circle cx="12.95" cy="838.3" r="2" fill="#1a1a1a"/><circle cx="12.3" cy="837.6999999999999" r=".75" fill="#d6d6d6"/><path d="M76 834.6999999999999l3.300 3.900l-3.300 3.900" fill="none" stroke="#b8b8b8" stroke-width="1.200"/><rect x="87" y="832" width="12.200" height="12" fill="#757be0"/><rect x="597" y="830.5" width="13" height="15.500" fill="#252525"/><rect x="612.5" y="830.5" width="13" height="15.500" fill="#252525"/><rect x="627.5" y="830.5" width="13" height="15.500" fill="#252525"/><rect x="672.5" y="830.5" width="13" height="15.500" fill="#252525"/><rect x="687.5" y="830.5" width="13" height="15.500" fill="#252525"/><rect x="702.5" y="830.5" width="13" height="15.500" fill="#252525"/><path d="M599.5 838.8a4 4.300 0 0 1 8 0Z" fill="#c2c2c2"/><path d="M597.5 841.3h4M605.5 841.3h4M598.5 838.8h10" stroke="#c2c2c2" stroke-width="1.100"/><path d="M602.1 835.8v6.500M604.9 835.8v6.500" stroke="#222" stroke-width=".9"/><circle cx="618.7" cy="838.0" r="1.900" fill="none" stroke="#7c7c7c" stroke-width="1"/><path d="M621.80 838.00L623.90 838.00M620.89 840.19L622.38 841.68M618.70 841.10L618.70 843.20M616.51 840.19L615.02 841.68M615.60 838.00L613.50 838.00M616.51 835.81L615.02 834.32M618.70 834.90L618.70 832.80M620.89 835.81L622.38 834.32" stroke="#7c7c7c" stroke-width=".9"/><path d="M628.3 843.0L637.8 833.0" stroke="#c2c2c2" stroke-width="1.300"/><path d="M744.96 833.52L745.59 834.94L745.83 836.40L745.70 837.80L745.48 839.12L744.95 840.32L744.15 841.36L743.14 842.15L741.97 842.68L740.74 842.90L739.49 842.84L738.30 842.51L737.23 841.89L736.34 841.04L735.68 840.00L735.30 838.84L735.21 837.63L735.46 836.44L735.99 835.37L736.74 834.46L737.69 833.78L738.75 833.35L739.88 833.19L740.97 833.43L741.91 833.96L742.64 834.67L743.14 835.50L743.40 836.38L743.42 837.23L743.27 838.01L743.03 838.72L742.65 839.33L742.14 839.81L741.55 840.14L740.92 840.31L740.29 840.31L739.69 840.22L739.13 840.00L738.65 839.65L738.27 839.20L738.02 838.68L737.90 838.12L737.96 837.56L738.18 837.07L738.51 836.66L738.91 836.37L739.35 836.19L739.79 836.14L740.20 836.20L740.54 836.42L740.78 836.71L740.91 837.01L740.93 837.31L740.86 837.56" fill="none" stroke="#c2c2c2" stroke-width="1.100" stroke-linecap="round" stroke-linejoin="round"/><rect x="752.500" y="830.5" width="154.500" height="15.500" fill="#1f1f1f"/><path d="M894 836.3l4 3.800l4-3.800" fill="none" stroke="#b8b8b8" stroke-width="1.300"/><polygon points="143.40,832.60 144.75,836.34 148.73,836.47 145.59,838.91 146.69,842.73 143.40,840.50 140.11,842.73 141.21,838.91 138.07,836.47 142.05,836.34" fill="#d8d8d8"/><rect x="155.5" y="834.3" width="7" height="7" fill="#0e3b31"/><path d="M157 832.3v11M161 832.3v11M154 835.5h10M154 840.0999999999999h10" stroke="#63d6b3" stroke-width="1.250"/><rect x="935.500" y="830" width="965.500" height="16.300" fill="#555c93"/><rect x="935.500" y="846" width="965.500" height="1" fill="#1f2242"/><rect x="2" y="847" width="925" height="16.500" fill="#2f2f2f"/><rect x="2" y="863.5" width="925" height=".7" fill="#1e1e1e"/><rect x="6" y="847.5" width="13.5" height="15.500" fill="#252525"/><rect x="36.3" y="847.5" width="12.7" height="15.500" fill="#252525"/><rect x="51.3" y="847.5" width="12.7" height="15.500" fill="#252525"/><path d="M7.7 855.3c2.500-3.600 8-3.600 10.500 0c-2.500 3.600-8 3.600-10.500 0Z" fill="#d6d6d6"/><circle cx="12.95" cy="855.3" r="2" fill="#1a1a1a"/><circle cx="12.3" cy="854.6999999999999" r=".75" fill="#d6d6d6"/><path d="M76 851.6999999999999l3.300 3.900l-3.300 3.900" fill="none" stroke="#b8b8b8" stroke-width="1.200"/><rect x="87" y="849" width="12.200" height="12" fill="#757be0"/><rect x="597" y="847.5" width="13" height="15.500" fill="#252525"/><rect x="612.5" y="847.5" width="13" height="15.500" fill="#252525"/><rect x="627.5" y="847.5" width="13" height="15.500" fill="#252525"/><rect x="672.5" y="847.5" width="13" height="15.500" fill="#252525"/><rect x="687.5" y="847.5" width="13" height="15.500" fill="#252525"/><rect x="702.5" y="847.5" width="13" height="15.500" fill="#252525"/><path d="M599.5 855.8a4 4.300 0 0 1 8 0Z" fill="#c2c2c2"/><path d="M597.5 858.3h4M605.5 858.3h4M598.5 855.8h10" stroke="#c2c2c2" stroke-width="1.100"/><path d="M602.1 852.8v6.500M604.9 852.8v6.500" stroke="#222" stroke-width=".9"/><circle cx="618.7" cy="855.0" r="1.900" fill="none" stroke="#7c7c7c" stroke-width="1"/><path d="M621.80 855.00L623.90 855.00M620.89 857.19L622.38 858.68M618.70 858.10L618.70 860.20M616.51 857.19L615.02 858.68M615.60 855.00L613.50 855.00M616.51 852.81L615.02 851.32M618.70 851.90L618.70 849.80M620.89 852.81L622.38 851.32" stroke="#7c7c7c" stroke-width=".9"/><path d="M628.3 860.0L637.8 850.0" stroke="#c2c2c2" stroke-width="1.300"/><path d="M744.96 850.52L745.59 851.94L745.83 853.40L745.70 854.80L745.48 856.12L744.95 857.32L744.15 858.36L743.14 859.15L741.97 859.68L740.74 859.90L739.49 859.84L738.30 859.51L737.23 858.89L736.34 858.04L735.68 857.00L735.30 855.84L735.21 854.63L735.46 853.44L735.99 852.37L736.74 851.46L737.69 850.78L738.75 850.35L739.88 850.19L740.97 850.43L741.91 850.96L742.64 851.67L743.14 852.50L743.40 853.38L743.42 854.23L743.27 855.01L743.03 855.72L742.65 856.33L742.14 856.81L741.55 857.14L740.92 857.31L740.29 857.31L739.69 857.22L739.13 857.00L738.65 856.65L738.27 856.20L738.02 855.68L737.90 855.12L737.96 854.56L738.18 854.07L738.51 853.66L738.91 853.37L739.35 853.19L739.79 853.14L740.20 853.20L740.54 853.42L740.78 853.71L740.91 854.01L740.93 854.31L740.86 854.56" fill="none" stroke="#c2c2c2" stroke-width="1.100" stroke-linecap="round" stroke-linejoin="round"/><rect x="752.500" y="847.5" width="154.500" height="15.500" fill="#1f1f1f"/><path d="M894 853.3l4 3.800l4-3.800" fill="none" stroke="#b8b8b8" stroke-width="1.300"/><polygon points="143.40,849.60 144.75,853.34 148.73,853.47 145.59,855.91 146.69,859.73 143.40,857.50 140.11,859.73 141.21,855.91 138.07,853.47 142.05,853.34" fill="#d8d8d8"/><rect x="155.5" y="851.3" width="7" height="7" fill="#0e3b31"/><path d="M157 849.3v11M161 849.3v11M154 852.5h10M154 857.0999999999999h10" stroke="#63d6b3" stroke-width="1.250"/><rect x="935.500" y="847" width="965.500" height="16.300" fill="#555c93"/><rect x="935.500" y="863" width="965.500" height="1" fill="#1f2242"/><rect x="2" y="864" width="925" height="16.500" fill="#2f2f2f"/><rect x="2" y="880.5" width="925" height=".7" fill="#1e1e1e"/><rect x="6" y="864.5" width="13.5" height="15.500" fill="#252525"/><rect x="36.3" y="864.5" width="12.7" height="15.500" fill="#252525"/><rect x="51.3" y="864.5" width="12.7" height="15.500" fill="#252525"/><path d="M7.7 872.3c2.500-3.600 8-3.600 10.500 0c-2.500 3.600-8 3.600-10.500 0Z" fill="#d6d6d6"/><circle cx="12.95" cy="872.3" r="2" fill="#1a1a1a"/><circle cx="12.3" cy="871.6999999999999" r=".75" fill="#d6d6d6"/><path d="M76 868.6999999999999l3.300 3.900l-3.300 3.900" fill="none" stroke="#b8b8b8" stroke-width="1.200"/><rect x="87" y="866" width="12.200" height="12" fill="#757be0"/><rect x="597" y="864.5" width="13" height="15.500" fill="#252525"/><rect x="612.5" y="864.5" width="13" height="15.500" fill="#252525"/><rect x="627.5" y="864.5" width="13" height="15.500" fill="#252525"/><rect x="672.5" y="864.5" width="13" height="15.500" fill="#252525"/><rect x="687.5" y="864.5" width="13" height="15.500" fill="#252525"/><rect x="702.5" y="864.5" width="13" height="15.500" fill="#252525"/><path d="M599.5 872.8a4 4.300 0 0 1 8 0Z" fill="#c2c2c2"/><path d="M597.5 875.3h4M605.5 875.3h4M598.5 872.8h10" stroke="#c2c2c2" stroke-width="1.100"/><path d="M602.1 869.8v6.500M604.9 869.8v6.500" stroke="#222" stroke-width=".9"/><circle cx="618.7" cy="872.0" r="1.900" fill="none" stroke="#7c7c7c" stroke-width="1"/><path d="M621.80 872.00L623.90 872.00M620.89 874.19L622.38 875.68M618.70 875.10L618.70 877.20M616.51 874.19L615.02 875.68M615.60 872.00L613.50 872.00M616.51 869.81L615.02 868.32M618.70 868.90L618.70 866.80M620.89 869.81L622.38 868.32" stroke="#7c7c7c" stroke-width=".9"/><path d="M628.3 877.0L637.8 867.0" stroke="#c2c2c2" stroke-width="1.300"/><path d="M744.96 867.52L745.59 868.94L745.83 870.40L745.70 871.80L745.48 873.12L744.95 874.32L744.15 875.36L743.14 876.15L741.97 876.68L740.74 876.90L739.49 876.84L738.30 876.51L737.23 875.89L736.34 875.04L735.68 874.00L735.30 872.84L735.21 871.63L735.46 870.44L735.99 869.37L736.74 868.46L737.69 867.78L738.75 867.35L739.88 867.19L740.97 867.43L741.91 867.96L742.64 868.67L743.14 869.50L743.40 870.38L743.42 871.23L743.27 872.01L743.03 872.72L742.65 873.33L742.14 873.81L741.55 874.14L740.92 874.31L740.29 874.31L739.69 874.22L739.13 874.00L738.65 873.65L738.27 873.20L738.02 872.68L737.90 872.12L737.96 871.56L738.18 871.07L738.51 870.66L738.91 870.37L739.35 870.19L739.79 870.14L740.20 870.20L740.54 870.42L740.78 870.71L740.91 871.01L740.93 871.31L740.86 871.56" fill="none" stroke="#c2c2c2" stroke-width="1.100" stroke-linecap="round" stroke-linejoin="round"/><rect x="752.500" y="864.5" width="154.500" height="15.500" fill="#1f1f1f"/><path d="M894 870.3l4 3.800l4-3.800" fill="none" stroke="#b8b8b8" stroke-width="1.300"/><polygon points="143.40,866.60 144.75,870.34 148.73,870.47 145.59,872.91 146.69,876.73 143.40,874.50 140.11,876.73 141.21,872.91 138.07,870.47 142.05,870.34" fill="#d8d8d8"/><rect x="155.5" y="868.3" width="7" height="7" fill="#0e3b31"/><path d="M157 866.3v11M161 866.3v11M154 869.5h10M154 874.0999999999999h10" stroke="#63d6b3" stroke-width="1.250"/><rect x="935.500" y="864" width="965.500" height="16.300" fill="#555c93"/><rect x="935.500" y="880" width="965.500" height="1" fill="#1f2242"/><rect x="2" y="881" width="925" height="16.500" fill="#2f2f2f"/><rect x="2" y="897.5" width="925" height=".7" fill="#1e1e1e"/><rect x="6" y="881.5" width="13.5" height="15.500" fill="#252525"/><rect x="36.3" y="881.5" width="12.7" height="15.500" fill="#252525"/><rect x="51.3" y="881.5" width="12.7" height="15.500" fill="#252525"/><path d="M7.7 889.3c2.500-3.600 8-3.600 10.500 0c-2.500 3.600-8 3.600-10.500 0Z" fill="#d6d6d6"/><circle cx="12.95" cy="889.3" r="2" fill="#1a1a1a"/><circle cx="12.3" cy="888.6999999999999" r=".75" fill="#d6d6d6"/><path d="M76 885.6999999999999l3.300 3.900l-3.300 3.900" fill="none" stroke="#b8b8b8" stroke-width="1.200"/><rect x="87" y="883" width="12.200" height="12" fill="#757be0"/><rect x="597" y="881.5" width="13" height="15.500" fill="#252525"/><rect x="612.5" y="881.5" width="13" height="15.500" fill="#252525"/><rect x="627.5" y="881.5" width="13" height="15.500" fill="#252525"/><rect x="672.5" y="881.5" width="13" height="15.500" fill="#252525"/><rect x="687.5" y="881.5" width="13" height="15.500" fill="#252525"/><rect x="702.5" y="881.5" width="13" height="15.500" fill="#252525"/><path d="M599.5 889.8a4 4.300 0 0 1 8 0Z" fill="#c2c2c2"/><path d="M597.5 892.3h4M605.5 892.3h4M598.5 889.8h10" stroke="#c2c2c2" stroke-width="1.100"/><path d="M602.1 886.8v6.500M604.9 886.8v6.500" stroke="#222" stroke-width=".9"/><circle cx="618.7" cy="889.0" r="1.900" fill="none" stroke="#7c7c7c" stroke-width="1"/><path d="M621.80 889.00L623.90 889.00M620.89 891.19L622.38 892.68M618.70 892.10L618.70 894.20M616.51 891.19L615.02 892.68M615.60 889.00L613.50 889.00M616.51 886.81L615.02 885.32M618.70 885.90L618.70 883.80M620.89 886.81L622.38 885.32" stroke="#7c7c7c" stroke-width=".9"/><path d="M628.3 894.0L637.8 884.0" stroke="#c2c2c2" stroke-width="1.300"/><path d="M744.96 884.52L745.59 885.94L745.83 887.40L745.70 888.80L745.48 890.12L744.95 891.32L744.15 892.36L743.14 893.15L741.97 893.68L740.74 893.90L739.49 893.84L738.30 893.51L737.23 892.89L736.34 892.04L735.68 891.00L735.30 889.84L735.21 888.63L735.46 887.44L735.99 886.37L736.74 885.46L737.69 884.78L738.75 884.35L739.88 884.19L740.97 884.43L741.91 884.96L742.64 885.67L743.14 886.50L743.40 887.38L743.42 888.23L743.27 889.01L743.03 889.72L742.65 890.33L742.14 890.81L741.55 891.14L740.92 891.31L740.29 891.31L739.69 891.22L739.13 891.00L738.65 890.65L738.27 890.20L738.02 889.68L737.90 889.12L737.96 888.56L738.18 888.07L738.51 887.66L738.91 887.37L739.35 887.19L739.79 887.14L740.20 887.20L740.54 887.42L740.78 887.71L740.91 888.01L740.93 888.31L740.86 888.56" fill="none" stroke="#c2c2c2" stroke-width="1.100" stroke-linecap="round" stroke-linejoin="round"/><rect x="752.500" y="881.5" width="154.500" height="15.500" fill="#1f1f1f"/><path d="M894 887.3l4 3.800l4-3.800" fill="none" stroke="#b8b8b8" stroke-width="1.300"/><polygon points="143.40,883.60 144.75,887.34 148.73,887.47 145.59,889.91 146.69,893.73 143.40,891.50 140.11,893.73 141.21,889.91 138.07,887.47 142.05,887.34" fill="#d8d8d8"/><rect x="155.5" y="885.3" width="7" height="7" fill="#0e3b31"/><path d="M157 883.3v11M161 883.3v11M154 886.5h10M154 891.0999999999999h10" stroke="#63d6b3" stroke-width="1.250"/><rect x="935.500" y="881" width="965.500" height="16.300" fill="#555c93"/><rect x="935.500" y="897" width="965.500" height="1" fill="#1f2242"/><rect x="2" y="898" width="925" height="16.500" fill="#2f2f2f"/><rect x="2" y="914.5" width="925" height=".7" fill="#1e1e1e"/><rect x="6" y="898.5" width="13.5" height="15.500" fill="#252525"/><rect x="36.3" y="898.5" width="12.7" height="15.500" fill="#252525"/><rect x="51.3" y="898.5" width="12.7" height="15.500" fill="#252525"/><path d="M7.7 906.3c2.500-3.600 8-3.600 10.500 0c-2.500 3.600-8 3.600-10.500 0Z" fill="#d6d6d6"/><circle cx="12.95" cy="906.3" r="2" fill="#1a1a1a"/><circle cx="12.3" cy="905.6999999999999" r=".75" fill="#d6d6d6"/><path d="M76 902.6999999999999l3.300 3.900l-3.300 3.900" fill="none" stroke="#b8b8b8" stroke-width="1.200"/><rect x="87" y="900" width="12.200" height="12" fill="#737373"/><rect x="597" y="898.5" width="13" height="15.500" fill="#252525"/><rect x="612.5" y="898.5" width="13" height="15.500" fill="#252525"/><rect x="627.5" y="898.5" width="13" height="15.500" fill="#252525"/><rect x="672.5" y="898.5" width="13" height="15.500" fill="#252525"/><rect x="687.5" y="898.5" width="13" height="15.500" fill="#252525"/><rect x="702.5" y="898.5" width="13" height="15.500" fill="#252525"/><path d="M600.7 907.8a2.800 2.300 0 0 1 5.600 0Z" fill="#c2c2c2"/><path d="M597.5 909.5h12" stroke="#c2c2c2" stroke-width="1.100"/><circle cx="618.7" cy="906.0" r="1.900" fill="none" stroke="#7c7c7c" stroke-width="1"/><path d="M621.80 906.00L623.90 906.00M620.89 908.19L622.38 909.68M618.70 909.10L618.70 911.20M616.51 908.19L615.02 909.68M615.60 906.00L613.50 906.00M616.51 903.81L615.02 902.32M618.70 902.90L618.70 900.80M620.89 903.81L622.38 902.32" stroke="#7c7c7c" stroke-width=".9"/><path d="M628.3 911.0L637.8 901.0" stroke="#c2c2c2" stroke-width="1.300"/><path d="M744.96 901.52L745.59 902.94L745.83 904.40L745.70 905.80L745.48 907.12L744.95 908.32L744.15 909.36L743.14 910.15L741.97 910.68L740.74 910.90L739.49 910.84L738.30 910.51L737.23 909.89L736.34 909.04L735.68 908.00L735.30 906.84L735.21 905.63L735.46 904.44L735.99 903.37L736.74 902.46L737.69 901.78L738.75 901.35L739.88 901.19L740.97 901.43L741.91 901.96L742.64 902.67L743.14 903.50L743.40 904.38L743.42 905.23L743.27 906.01L743.03 906.72L742.65 907.33L742.14 907.81L741.55 908.14L740.92 908.31L740.29 908.31L739.69 908.22L739.13 908.00L738.65 907.65L738.27 907.20L738.02 906.68L737.90 906.12L737.96 905.56L738.18 905.07L738.51 904.66L738.91 904.37L739.35 904.19L739.79 904.14L740.20 904.20L740.54 904.42L740.78 904.71L740.91 905.01L740.93 905.31L740.86 905.56" fill="none" stroke="#c2c2c2" stroke-width="1.100" stroke-linecap="round" stroke-linejoin="round"/><rect x="752.500" y="898.5" width="154.500" height="15.500" fill="#1f1f1f"/><path d="M894 904.3l4 3.800l4-3.800" fill="none" stroke="#b8b8b8" stroke-width="1.300"/><rect x="155.5" y="902.3" width="7" height="7" fill="#0e3b31"/><path d="M157 900.3v11M161 900.3v11M154 903.5h10M154 908.0999999999999h10" stroke="#63d6b3" stroke-width="1.250"/><rect x="935.500" y="898" width="965.500" height="16.300" fill="#565656"/><rect x="935.500" y="914" width="965.500" height="1" fill="#252525"/><rect x="2" y="915" width="925" height="16.500" fill="#2f2f2f"/><rect x="2" y="931.5" width="925" height=".7" fill="#1e1e1e"/><rect x="6" y="915.5" width="13.5" height="15.500" fill="#252525"/><rect x="36.3" y="915.5" width="12.7" height="15.500" fill="#252525"/><rect x="51.3" y="915.5" width="12.7" height="15.500" fill="#252525"/><path d="M7.7 923.3c2.500-3.600 8-3.600 10.500 0c-2.500 3.600-8 3.600-10.500 0Z" fill="#d6d6d6"/><circle cx="12.95" cy="923.3" r="2" fill="#1a1a1a"/><circle cx="12.3" cy="922.6999999999999" r=".75" fill="#d6d6d6"/><path d="M76 919.6999999999999l3.300 3.900l-3.300 3.900" fill="none" stroke="#b8b8b8" stroke-width="1.200"/><rect x="87" y="917" width="12.200" height="12" fill="#737373"/><rect x="597" y="915.5" width="13" height="15.500" fill="#252525"/><rect x="612.5" y="915.5" width="13" height="15.500" fill="#252525"/><rect x="627.5" y="915.5" width="13" height="15.500" fill="#252525"/><rect x="672.5" y="915.5" width="13" height="15.500" fill="#252525"/><rect x="687.5" y="915.5" width="13" height="15.500" fill="#252525"/><rect x="702.5" y="915.5" width="13" height="15.500" fill="#252525"/><path d="M600.7 924.8a2.800 2.300 0 0 1 5.600 0Z" fill="#c2c2c2"/><path d="M597.5 926.5h12" stroke="#c2c2c2" stroke-width="1.100"/><circle cx="618.7" cy="923.0" r="1.900" fill="none" stroke="#7c7c7c" stroke-width="1"/><path d="M621.80 923.00L623.90 923.00M620.89 925.19L622.38 926.68M618.70 926.10L618.70 928.20M616.51 925.19L615.02 926.68M615.60 923.00L613.50 923.00M616.51 920.81L615.02 919.32M618.70 919.90L618.70 917.80M620.89 920.81L622.38 919.32" stroke="#7c7c7c" stroke-width=".9"/><path d="M628.3 928.0L637.8 918.0" stroke="#c2c2c2" stroke-width="1.300"/><path d="M744.96 918.52L745.59 919.94L745.83 921.40L745.70 922.80L745.48 924.12L744.95 925.32L744.15 926.36L743.14 927.15L741.97 927.68L740.74 927.90L739.49 927.84L738.30 927.51L737.23 926.89L736.34 926.04L735.68 925.00L735.30 923.84L735.21 922.63L735.46 921.44L735.99 920.37L736.74 919.46L737.69 918.78L738.75 918.35L739.88 918.19L740.97 918.43L741.91 918.96L742.64 919.67L743.14 920.50L743.40 921.38L743.42 922.23L743.27 923.01L743.03 923.72L742.65 924.33L742.14 924.81L741.55 925.14L740.92 925.31L740.29 925.31L739.69 925.22L739.13 925.00L738.65 924.65L738.27 924.20L738.02 923.68L737.90 923.12L737.96 922.56L738.18 922.07L738.51 921.66L738.91 921.37L739.35 921.19L739.79 921.14L740.20 921.20L740.54 921.42L740.78 921.71L740.91 922.01L740.93 922.31L740.86 922.56" fill="none" stroke="#c2c2c2" stroke-width="1.100" stroke-linecap="round" stroke-linejoin="round"/><rect x="752.500" y="915.5" width="154.500" height="15.500" fill="#1f1f1f"/><path d="M894 921.3l4 3.800l4-3.800" fill="none" stroke="#b8b8b8" stroke-width="1.300"/><rect x="155.5" y="919.3" width="7" height="7" fill="#0e3b31"/><path d="M157 917.3v11M161 917.3v11M154 920.5h10M154 925.0999999999999h10" stroke="#63d6b3" stroke-width="1.250"/><rect x="935.500" y="915" width="965.500" height="16.300" fill="#565656"/><rect x="935.500" y="931" width="965.500" height="1" fill="#252525"/><rect x="2" y="932" width="925" height="16.500" fill="#2f2f2f"/><rect x="2" y="948.5" width="925" height=".7" fill="#1e1e1e"/><rect x="6" y="932.5" width="13.5" height="15.500" fill="#252525"/><rect x="36.3" y="932.5" width="12.7" height="15.500" fill="#252525"/><rect x="51.3" y="932.5" width="12.7" height="15.500" fill="#252525"/><path d="M7.7 940.3c2.500-3.600 8-3.600 10.500 0c-2.500 3.600-8 3.600-10.500 0Z" fill="#d6d6d6"/><circle cx="12.95" cy="940.3" r="2" fill="#1a1a1a"/><circle cx="12.3" cy="939.6999999999999" r=".75" fill="#d6d6d6"/><path d="M76 936.6999999999999l3.300 3.900l-3.300 3.900" fill="none" stroke="#b8b8b8" stroke-width="1.200"/><rect x="87" y="934" width="12.200" height="12" fill="#737373"/><rect x="597" y="932.5" width="13" height="15.500" fill="#252525"/><rect x="612.5" y="932.5" width="13" height="15.500" fill="#252525"/><rect x="627.5" y="932.5" width="13" height="15.500" fill="#252525"/><rect x="672.5" y="932.5" width="13" height="15.500" fill="#252525"/><rect x="687.5" y="932.5" width="13" height="15.500" fill="#252525"/><rect x="702.5" y="932.5" width="13" height="15.500" fill="#252525"/><path d="M600.7 941.8a2.800 2.300 0 0 1 5.600 0Z" fill="#c2c2c2"/><path d="M597.5 943.5h12" stroke="#c2c2c2" stroke-width="1.100"/><circle cx="618.7" cy="940.0" r="1.900" fill="none" stroke="#7c7c7c" stroke-width="1"/><path d="M621.80 940.00L623.90 940.00M620.89 942.19L622.38 943.68M618.70 943.10L618.70 945.20M616.51 942.19L615.02 943.68M615.60 940.00L613.50 940.00M616.51 937.81L615.02 936.32M618.70 936.90L618.70 934.80M620.89 937.81L622.38 936.32" stroke="#7c7c7c" stroke-width=".9"/><path d="M628.3 945.0L637.8 935.0" stroke="#c2c2c2" stroke-width="1.300"/><path d="M744.96 935.52L745.59 936.94L745.83 938.40L745.70 939.80L745.48 941.12L744.95 942.32L744.15 943.36L743.14 944.15L741.97 944.68L740.74 944.90L739.49 944.84L738.30 944.51L737.23 943.89L736.34 943.04L735.68 942.00L735.30 940.84L735.21 939.63L735.46 938.44L735.99 937.37L736.74 936.46L737.69 935.78L738.75 935.35L739.88 935.19L740.97 935.43L741.91 935.96L742.64 936.67L743.14 937.50L743.40 938.38L743.42 939.23L743.27 940.01L743.03 940.72L742.65 941.33L742.14 941.81L741.55 942.14L740.92 942.31L740.29 942.31L739.69 942.22L739.13 942.00L738.65 941.65L738.27 941.20L738.02 940.68L737.90 940.12L737.96 939.56L738.18 939.07L738.51 938.66L738.91 938.37L739.35 938.19L739.79 938.14L740.20 938.20L740.54 938.42L740.78 938.71L740.91 939.01L740.93 939.31L740.86 939.56" fill="none" stroke="#c2c2c2" stroke-width="1.100" stroke-linecap="round" stroke-linejoin="round"/><rect x="752.500" y="932.5" width="154.500" height="15.500" fill="#1f1f1f"/><path d="M894 938.3l4 3.800l4-3.800" fill="none" stroke="#b8b8b8" stroke-width="1.300"/><rect x="155.5" y="936.3" width="7" height="7" fill="#0e3b31"/><path d="M157 934.3v11M161 934.3v11M154 937.5h10M154 942.0999999999999h10" stroke="#63d6b3" stroke-width="1.250"/><rect x="935.500" y="932" width="965.500" height="16.300" fill="#565656"/><rect x="935.500" y="948" width="965.500" height="1" fill="#252525"/><rect x="2" y="949" width="925" height="16.500" fill="#2f2f2f"/><rect x="2" y="965.5" width="925" height=".7" fill="#1e1e1e"/><rect x="6" y="949.5" width="13.5" height="15.500" fill="#252525"/><rect x="36.3" y="949.5" width="12.7" height="15.500" fill="#252525"/><rect x="51.3" y="949.5" width="12.7" height="15.500" fill="#252525"/><path d="M7.7 957.3c2.500-3.600 8-3.600 10.500 0c-2.500 3.600-8 3.600-10.500 0Z" fill="#d6d6d6"/><circle cx="12.95" cy="957.3" r="2" fill="#1a1a1a"/><circle cx="12.3" cy="956.6999999999999" r=".75" fill="#d6d6d6"/><path d="M76 953.6999999999999l3.300 3.900l-3.300 3.900" fill="none" stroke="#b8b8b8" stroke-width="1.200"/><rect x="87" y="951" width="12.200" height="12" fill="#737373"/><rect x="597" y="949.5" width="13" height="15.500" fill="#252525"/><rect x="612.5" y="949.5" width="13" height="15.500" fill="#252525"/><rect x="627.5" y="949.5" width="13" height="15.500" fill="#252525"/><rect x="672.5" y="949.5" width="13" height="15.500" fill="#252525"/><rect x="687.5" y="949.5" width="13" height="15.500" fill="#252525"/><rect x="702.5" y="949.5" width="13" height="15.500" fill="#252525"/><path d="M600.7 958.8a2.800 2.300 0 0 1 5.600 0Z" fill="#c2c2c2"/><path d="M597.5 960.5h12" stroke="#c2c2c2" stroke-width="1.100"/><circle cx="618.7" cy="957.0" r="1.900" fill="none" stroke="#7c7c7c" stroke-width="1"/><path d="M621.80 957.00L623.90 957.00M620.89 959.19L622.38 960.68M618.70 960.10L618.70 962.20M616.51 959.19L615.02 960.68M615.60 957.00L613.50 957.00M616.51 954.81L615.02 953.32M618.70 953.90L618.70 951.80M620.89 954.81L622.38 953.32" stroke="#7c7c7c" stroke-width=".9"/><path d="M628.3 962.0L637.8 952.0" stroke="#c2c2c2" stroke-width="1.300"/><path d="M744.96 952.52L745.59 953.94L745.83 955.40L745.70 956.80L745.48 958.12L744.95 959.32L744.15 960.36L743.14 961.15L741.97 961.68L740.74 961.90L739.49 961.84L738.30 961.51L737.23 960.89L736.34 960.04L735.68 959.00L735.30 957.84L735.21 956.63L735.46 955.44L735.99 954.37L736.74 953.46L737.69 952.78L738.75 952.35L739.88 952.19L740.97 952.43L741.91 952.96L742.64 953.67L743.14 954.50L743.40 955.38L743.42 956.23L743.27 957.01L743.03 957.72L742.65 958.33L742.14 958.81L741.55 959.14L740.92 959.31L740.29 959.31L739.69 959.22L739.13 959.00L738.65 958.65L738.27 958.20L738.02 957.68L737.90 957.12L737.96 956.56L738.18 956.07L738.51 955.66L738.91 955.37L739.35 955.19L739.79 955.14L740.20 955.20L740.54 955.42L740.78 955.71L740.91 956.01L740.93 956.31L740.86 956.56" fill="none" stroke="#c2c2c2" stroke-width="1.100" stroke-linecap="round" stroke-linejoin="round"/><rect x="752.500" y="949.5" width="154.500" height="15.500" fill="#1f1f1f"/><path d="M894 955.3l4 3.800l4-3.800" fill="none" stroke="#b8b8b8" stroke-width="1.300"/><rect x="155.5" y="953.3" width="7" height="7" fill="#0e3b31"/><path d="M157 951.3v11M161 951.3v11M154 954.5h10M154 959.0999999999999h10" stroke="#63d6b3" stroke-width="1.250"/><rect x="935.500" y="949" width="965.500" height="16.300" fill="#565656"/><rect x="935.500" y="965" width="965.500" height="1" fill="#252525"/><rect x="2" y="966" width="925" height="16.500" fill="#2f2f2f"/><rect x="2" y="982.5" width="925" height=".7" fill="#1e1e1e"/><rect x="6" y="966.5" width="13.5" height="15.500" fill="#252525"/><rect x="36.3" y="966.5" width="12.7" height="15.500" fill="#252525"/><rect x="51.3" y="966.5" width="12.7" height="15.500" fill="#252525"/><path d="M7.7 974.3c2.500-3.600 8-3.600 10.500 0c-2.500 3.600-8 3.600-10.500 0Z" fill="#d6d6d6"/><circle cx="12.95" cy="974.3" r="2" fill="#1a1a1a"/><circle cx="12.3" cy="973.6999999999999" r=".75" fill="#d6d6d6"/><path d="M76 970.6999999999999l3.300 3.900l-3.300 3.900" fill="none" stroke="#b8b8b8" stroke-width="1.200"/><rect x="87" y="968" width="12.200" height="12" fill="#737373"/><rect x="597" y="966.5" width="13" height="15.500" fill="#252525"/><rect x="612.5" y="966.5" width="13" height="15.500" fill="#252525"/><rect x="627.5" y="966.5" width="13" height="15.500" fill="#252525"/><rect x="672.5" y="966.5" width="13" height="15.500" fill="#252525"/><rect x="687.5" y="966.5" width="13" height="15.500" fill="#252525"/><rect x="702.5" y="966.5" width="13" height="15.500" fill="#252525"/><path d="M600.7 975.8a2.800 2.300 0 0 1 5.600 0Z" fill="#c2c2c2"/><path d="M597.5 977.5h12" stroke="#c2c2c2" stroke-width="1.100"/><circle cx="618.7" cy="974.0" r="1.900" fill="none" stroke="#7c7c7c" stroke-width="1"/><path d="M621.80 974.00L623.90 974.00M620.89 976.19L622.38 977.68M618.70 977.10L618.70 979.20M616.51 976.19L615.02 977.68M615.60 974.00L613.50 974.00M616.51 971.81L615.02 970.32M618.70 970.90L618.70 968.80M620.89 971.81L622.38 970.32" stroke="#7c7c7c" stroke-width=".9"/><path d="M628.3 979.0L637.8 969.0" stroke="#c2c2c2" stroke-width="1.300"/><path d="M744.96 969.52L745.59 970.94L745.83 972.40L745.70 973.80L745.48 975.12L744.95 976.32L744.15 977.36L743.14 978.15L741.97 978.68L740.74 978.90L739.49 978.84L738.30 978.51L737.23 977.89L736.34 977.04L735.68 976.00L735.30 974.84L735.21 973.63L735.46 972.44L735.99 971.37L736.74 970.46L737.69 969.78L738.75 969.35L739.88 969.19L740.97 969.43L741.91 969.96L742.64 970.67L743.14 971.50L743.40 972.38L743.42 973.23L743.27 974.01L743.03 974.72L742.65 975.33L742.14 975.81L741.55 976.14L740.92 976.31L740.29 976.31L739.69 976.22L739.13 976.00L738.65 975.65L738.27 975.20L738.02 974.68L737.90 974.12L737.96 973.56L738.18 973.07L738.51 972.66L738.91 972.37L739.35 972.19L739.79 972.14L740.20 972.20L740.54 972.42L740.78 972.71L740.91 973.01L740.93 973.31L740.86 973.56" fill="none" stroke="#c2c2c2" stroke-width="1.100" stroke-linecap="round" stroke-linejoin="round"/><rect x="752.500" y="966.5" width="154.500" height="15.500" fill="#1f1f1f"/><path d="M894 972.3l4 3.800l4-3.800" fill="none" stroke="#b8b8b8" stroke-width="1.300"/><rect x="155.5" y="970.3" width="7" height="7" fill="#0e3b31"/><path d="M157 968.3v11M161 968.3v11M154 971.5h10M154 976.0999999999999h10" stroke="#63d6b3" stroke-width="1.250"/><rect x="935.500" y="966" width="965.500" height="16.300" fill="#565656"/><rect x="935.500" y="982" width="965.500" height="1" fill="#252525"/><rect x="2" y="983" width="925" height="16.500" fill="#2f2f2f"/><rect x="2" y="999.5" width="925" height=".7" fill="#1e1e1e"/><rect x="6" y="983.5" width="13.5" height="15.500" fill="#252525"/><rect x="36.3" y="983.5" width="12.7" height="15.500" fill="#252525"/><rect x="51.3" y="983.5" width="12.7" height="15.500" fill="#252525"/><path d="M7.7 991.3c2.500-3.600 8-3.600 10.500 0c-2.500 3.600-8 3.600-10.500 0Z" fill="#d6d6d6"/><circle cx="12.95" cy="991.3" r="2" fill="#1a1a1a"/><circle cx="12.3" cy="990.6999999999999" r=".75" fill="#d6d6d6"/><path d="M76 987.6999999999999l3.300 3.900l-3.300 3.900" fill="none" stroke="#b8b8b8" stroke-width="1.200"/><rect x="87" y="985" width="12.200" height="12" fill="#737373"/><rect x="597" y="983.5" width="13" height="15.500" fill="#252525"/><rect x="612.5" y="983.5" width="13" height="15.500" fill="#252525"/><rect x="627.5" y="983.5" width="13" height="15.500" fill="#252525"/><rect x="672.5" y="983.5" width="13" height="15.500" fill="#252525"/><rect x="687.5" y="983.5" width="13" height="15.500" fill="#252525"/><rect x="702.5" y="983.5" width="13" height="15.500" fill="#252525"/><path d="M600.7 992.8a2.800 2.300 0 0 1 5.600 0Z" fill="#c2c2c2"/><path d="M597.5 994.5h12" stroke="#c2c2c2" stroke-width="1.100"/><path d="M628.3 996.0L637.8 986.0" stroke="#c2c2c2" stroke-width="1.300"/><path d="M744.96 986.52L745.59 987.94L745.83 989.40L745.70 990.80L745.48 992.12L744.95 993.32L744.15 994.36L743.14 995.15L741.97 995.68L740.74 995.90L739.49 995.84L738.30 995.51L737.23 994.89L736.34 994.04L735.68 993.00L735.30 991.84L735.21 990.63L735.46 989.44L735.99 988.37L736.74 987.46L737.69 986.78L738.75 986.35L739.88 986.19L740.97 986.43L741.91 986.96L742.64 987.67L743.14 988.50L743.40 989.38L743.42 990.23L743.27 991.01L743.03 991.72L742.65 992.33L742.14 992.81L741.55 993.14L740.92 993.31L740.29 993.31L739.69 993.22L739.13 993.00L738.65 992.65L738.27 992.20L738.02 991.68L737.90 991.12L737.96 990.56L738.18 990.07L738.51 989.66L738.91 989.37L739.35 989.19L739.79 989.14L740.20 989.20L740.54 989.42L740.78 989.71L740.91 990.01L740.93 990.31L740.86 990.56" fill="none" stroke="#c2c2c2" stroke-width="1.100" stroke-linecap="round" stroke-linejoin="round"/><rect x="752.500" y="983.5" width="154.500" height="15.500" fill="#1f1f1f"/><path d="M894 989.3l4 3.800l4-3.800" fill="none" stroke="#b8b8b8" stroke-width="1.300"/><rect x="137.500" y="984.5" width="13" height="13" fill="#bdbdbd" stroke="#141414" stroke-width="1"/><path d="M0 0" /><rect x="935.500" y="983" width="965.500" height="16.300" fill="#565656"/><rect x="935.500" y="999" width="965.500" height="1" fill="#252525"/><rect x="2" y="779" width="925" height="16.500" fill="#262626"/><rect x="138" y="779" width="459" height="16.500" fill="#3b3b3b"/><rect x="2" y="795.500" width="925" height=".7" fill="#1a1a1a"/><rect x="935.500" y="779" width="965.500" height="17" fill="#343433"/><circle cx="128.500" cy="788" r="4.600" fill="none" stroke="#c2c2c2" stroke-width="1.200"/><path d="M126.500 781.500h4M128.500 781.500v2" stroke="#c2c2c2" stroke-width="1.200"/><rect x="597.500" y="784.500" width="6.500" height="4.600" rx="2.300" fill="none" stroke="#c2c2c2" stroke-width="1.300"/><rect x="602.500" y="784.500" width="6.500" height="4.600" rx="2.300" fill="none" stroke="#c2c2c2" stroke-width="1.300"/><rect x="613.500" y="777.800" width="41" height="18.500" fill="#1b3558"/><rect x="616" y="779.300" width="36" height="15.200" rx="1.500" fill="#f1f2fa" stroke="#2e5fa8" stroke-width="1"/><path d="M757.46 782.22L758.09 783.64L758.33 785.10L758.20 786.50L757.98 787.82L757.45 789.02L756.65 790.06L755.64 790.85L754.47 791.38L753.24 791.60L751.99 791.54L750.80 791.21L749.73 790.59L748.84 789.74L748.18 788.70L747.80 787.54L747.71 786.33L747.96 785.14L748.49 784.07L749.24 783.16L750.19 782.48L751.25 782.05L752.38 781.89L753.47 782.13L754.41 782.66L755.14 783.37L755.64 784.20L755.90 785.08L755.92 785.93L755.77 786.71L755.53 787.42L755.15 788.03L754.64 788.51L754.05 788.84L753.42 789.01L752.79 789.01L752.19 788.92L751.63 788.70L751.15 788.35L750.77 787.90L750.52 787.38L750.40 786.82L750.46 786.26L750.68 785.77L751.01 785.36L751.41 785.07L751.85 784.89L752.29 784.84L752.70 784.90L753.04 785.12L753.28 785.41L753.41 785.71L753.43 786.01L753.36 786.26" fill="none" stroke="#c2c2c2" stroke-width="1.100" stroke-linecap="round" stroke-linejoin="round"/><path d="M932 782.500h7M932 793h7M935.500 782.500v10.500" stroke="#5b9be8" stroke-width="1.300"/><rect x="929" y="707" width="972" height="36" fill="#232323"/><rect x="935" y="713" width="960" height="8.500" fill="#423e3b"/><rect x="935" y="713" width="134" height="8.500" fill="#7e7e7e"/><path d="M935.500 712.500v9.500h-3a4.500 4.750 0 0 1 0-9.500Z" fill="#4a90e2"/><path d="M1068.500 712.500v9.500h3a4.500 4.750 0 0 0 0-9.500Z" fill="#4a90e2"/><path d="M1001.5 738.5V742" stroke="#a8a8a8" stroke-width="1"/><path d="M1067.5 738.5V742" stroke="#a8a8a8" stroke-width="1"/><path d="M1133.5 736.5V742" stroke="#a8a8a8" stroke-width="1"/><path d="M1199.5 738.5V742" stroke="#a8a8a8" stroke-width="1"/><path d="M1265.5 738.5V742" stroke="#a8a8a8" stroke-width="1"/><path d="M1331.5 736.5V742" stroke="#a8a8a8" stroke-width="1"/><path d="M1397.5 738.5V742" stroke="#a8a8a8" stroke-width="1"/><path d="M1463.5 738.5V742" stroke="#a8a8a8" stroke-width="1"/><path d="M1529.5 736.5V742" stroke="#a8a8a8" stroke-width="1"/><path d="M1595.5 738.5V742" stroke="#a8a8a8" stroke-width="1"/><path d="M1661.5 738.5V742" stroke="#a8a8a8" stroke-width="1"/><path d="M1727.5 736.5V742" stroke="#a8a8a8" stroke-width="1"/><path d="M1793.5 738.5V742" stroke="#a8a8a8" stroke-width="1"/><path d="M1859.5 738.5V742" stroke="#a8a8a8" stroke-width="1"/><rect x="929" y="742" width="972" height="1" fill="#101010"/><rect x="929" y="743" width="972" height="15" fill="#616161"/><rect x="935.500" y="758" width="965.500" height="3.300" fill="#3fc849"/><rect x="929" y="758" width="6.500" height="3.300" fill="#2a2a2a"/><rect x="929" y="757.200" width="972" height=".8" fill="#1a1a1a"/><rect x="929" y="761.300" width="972" height=".9" fill="#141414"/><path d="M934.800 743.500v14h-1.800a4 4 0 0 1-4-4v-6a4 4 0 0 1 4-4Z" fill="#4a90e2"/><rect x="1901" y="707" width="17" height="352" fill="#232323"/><path d="M1904.500 744.500h10.500v10l-5.250 5l-5.250-5Z" fill="#c9c9c9"/><rect x="1901" y="761.500" width="17" height="1" fill="#141414"/><path d="M1909 768h7v7h-7Z" fill="#c9c9c9"/><path d="M1902 772l7-6v12Z" fill="none" stroke="#c9c9c9" stroke-width="1.100"/><circle cx="1907.500" cy="775.500" r="2.300" fill="#232323" stroke="#c9c9c9" stroke-width="1"/><path d="M929 728h13.500v4.500l-6.750 8l-6.750-8Z" fill="#4a90e2"/><path d="M934 733.500h1M936.500 733.500h1" stroke="#16305a" stroke-width="1"/><rect x="935.200" y="740" width="1" height="319" fill="#6aa5ea"/><rect x="2" y="1058.700" width="1916" height="1" fill="#0c0c0c"/><rect x="2" y="1059.500" width="1916" height="17" fill="#232323"/><rect x="927" y="1059" width="1.500" height="17" fill="#151515"/><rect x="5" y="1061" width="17" height="14.500" fill="#14253f"/><rect x="8.5" y="1063.5" width="6" height="6" fill="#10284f" stroke="#7aa6ee" stroke-width="1"/><rect x="10.7" y="1065.7" width="6" height="6" fill="#10284f" stroke="#7aa6ee" stroke-width="1"/><rect x="12.9" y="1067.9" width="6" height="6" fill="#10284f" stroke="#7aa6ee" stroke-width="1"/><circle cx="15.900" cy="1070.900" r=".9" fill="#7aa6ee"/><circle cx="30" cy="1066.300" r="3.600" fill="none" stroke="#c2c2c2" stroke-width="1.100"/><rect x="30.800" y="1066.800" width="5.800" height="5.800" fill="#232323" stroke="#c2c2c2" stroke-width="1.100"/><path d="M46.500 1062h6.500v3.500l2 2l-2 2v3.500h-6.500v-3.500l-2-2l2-2Z" fill="#9a9a9a" stroke="#c2c2c2" stroke-width=".6"/><rect x="595.500" y="1060.500" width="133" height="15" fill="#262626" stroke="#1a1a1a"/><path d="M933.500 1069.500l3.200-3.800l1.600 1.900l1.200-1.300l3.300 3.200Z" fill="#c2c2c2"/><path d="M958.500 1068.500h34" stroke="#3d3d3d" stroke-width="2"/><circle cx="996.500" cy="1069" r="4" fill="#232323" stroke="#c2c2c2" stroke-width="1.600"/><path d="M1014 1071l5.300-6.500l3 3.500l2.200-2.500l5.500 5.500Z" fill="#c2c2c2"/><rect x="1037" y="1061.500" width="119" height="13" rx="6.500" fill="#2f2f2f"/></svg>
<span class="t" style="left:49.00px;top:688px;font-size:11px;line-height:11px;color:#dcdcdc;transform:scaleX(0.9891);">1. Frontal Panels Textures</span>
<span class="t" style="left:254.00px;top:688px;font-size:11px;line-height:11px;color:#a0a0a0;transform:scaleX(0.9804);">2. Back Panels Textures</span>
<span class="t" style="left:447.50px;top:688px;font-size:11px;line-height:11px;color:#a0a0a0;transform:scaleX(0.9813);">3. Visor Textures</span>
<span class="t" style="left:606.00px;top:688px;font-size:11px;line-height:11px;color:#a0a0a0;transform:scaleX(0.9762);">4. Choose colors and details</span>
<span class="t" style="left:820.00px;top:688px;font-size:11px;line-height:11px;color:#a0a0a0;transform:scaleX(0.9113);">Scene1</span>
<span class="t" style="left:932.00px;top:688px;font-size:11px;line-height:11px;color:#a0a0a0;transform:scaleX(0.9247);">Scene2</span>
<span class="t" style="left:1044.00px;top:688px;font-size:11px;line-height:11px;color:#a0a0a0;transform:scaleX(0.9247);">Scene3</span>
<span class="t" style="left:1156.00px;top:688px;font-size:11px;line-height:11px;color:#a0a0a0;transform:scaleX(0.9247);">Scene4</span>
<span class="t" style="left:1269.00px;top:688px;font-size:11px;line-height:11px;color:#a0a0a0;transform:scaleX(0.9247);">Scene5</span>
<span class="t" style="left:1381.00px;top:688px;font-size:11px;line-height:11px;color:#a0a0a0;transform:scaleX(0.9247);">Scene6</span>
<span class="t" style="left:17.50px;top:712px;font-size:13.2px;line-height:13.2px;color:#4a90e2;font-family:'Liberation Sans',sans-serif;font-weight:700;transform:scaleX(1.1382);">0:00:00:00</span>
<span class="t" style="left:12.20px;top:729px;font-size:10px;line-height:10px;color:#2f5688;transform:scaleX(1.0333);">00000 (30.00 fps)</span>
<span class="t" style="left:107.00px;top:749px;font-size:8.5px;line-height:8.5px;color:#a0a0a0;transform:scaleX(1.0577);">#</span>
<span class="t" style="left:121.50px;top:749px;font-size:8.5px;line-height:8.5px;color:#a0a0a0;">.</span>
<span class="t" style="left:140.30px;top:749px;font-size:9.2px;line-height:9.2px;color:#a6a6a6;transform:scaleX(0.9978);">Layer Name</span>
<span class="t" style="left:735.40px;top:749px;font-size:9.2px;line-height:9.2px;color:#a6a6a6;transform:scaleX(0.9686);">Parent &amp; Link</span>
<span class="t" style="left:643.00px;top:748px;font-size:11.5px;line-height:11.5px;color:#c2c2c2;transform:scaleX(1.1179);font-style:italic;">fx</span>
<span class="t" style="left:108.30px;top:764px;font-size:10.5px;line-height:10.5px;color:#cfcfcf;transform:scaleX(0.9761);">1</span>
<span class="t" style="left:760.60px;top:765px;font-size:10.5px;line-height:10.5px;color:#cfcfcf;transform:scaleX(0.9959);">None</span>
<span class="t" style="left:141.30px;top:766px;font-size:5.5px;line-height:5.5px;color:#8fc0f5;transform:scaleX(0.9815);">Ps</span>
<span class="t" style="left:157.75px;top:765px;font-size:10.5px;line-height:10.5px;color:#cfcfcf;transform:scaleX(1.0849);">[Scene_02b.psd]</span>
<span class="t" style="left:108.30px;top:798px;font-size:10.5px;line-height:10.5px;color:#cfcfcf;transform:scaleX(0.9761);">2</span>
<span class="t" style="left:760.60px;top:799px;font-size:10.5px;line-height:10.5px;color:#cfcfcf;transform:scaleX(0.9959);">None</span>
<span class="t" style="left:173.30px;top:799px;font-size:10.5px;line-height:10.5px;color:#cfcfcf;transform:scaleX(1.1110);">Front Left Panel</span>
<span class="t" style="left:108.30px;top:815px;font-size:10.5px;line-height:10.5px;color:#cfcfcf;transform:scaleX(0.9761);">3</span>
<span class="t" style="left:760.60px;top:816px;font-size:10.5px;line-height:10.5px;color:#cfcfcf;transform:scaleX(0.9959);">None</span>
<span class="t" style="left:173.30px;top:816px;font-size:10.5px;line-height:10.5px;color:#cfcfcf;transform:scaleX(1.0984);">Front Right Panel</span>
<span class="t" style="left:108.30px;top:832px;font-size:10.5px;line-height:10.5px;color:#cfcfcf;transform:scaleX(0.9761);">4</span>
<span class="t" style="left:760.60px;top:833px;font-size:10.5px;line-height:10.5px;color:#cfcfcf;transform:scaleX(0.9959);">None</span>
<span class="t" style="left:173.30px;top:833px;font-size:10.5px;line-height:10.5px;color:#cfcfcf;transform:scaleX(1.0944);">Left Panel</span>
<span class="t" style="left:108.30px;top:849px;font-size:10.5px;line-height:10.5px;color:#cfcfcf;transform:scaleX(0.9761);">5</span>
<span class="t" style="left:760.60px;top:850px;font-size:10.5px;line-height:10.5px;color:#cfcfcf;transform:scaleX(0.9959);">None</span>
<span class="t" style="left:173.30px;top:850px;font-size:10.5px;line-height:10.5px;color:#cfcfcf;transform:scaleX(1.0823);">Right Panel</span>
<span class="t" style="left:108.30px;top:866px;font-size:10.5px;line-height:10.5px;color:#cfcfcf;transform:scaleX(0.9761);">6</span>
<span class="t" style="left:760.60px;top:867px;font-size:10.5px;line-height:10.5px;color:#cfcfcf;transform:scaleX(0.9959);">None</span>
<span class="t" style="left:173.30px;top:867px;font-size:10.5px;line-height:10.5px;color:#cfcfcf;transform:scaleX(1.1063);">Right Grommet</span>
<span class="t" style="left:108.30px;top:883px;font-size:10.5px;line-height:10.5px;color:#cfcfcf;transform:scaleX(0.9761);">7</span>
<span class="t" style="left:760.60px;top:884px;font-size:10.5px;line-height:10.5px;color:#cfcfcf;transform:scaleX(0.9959);">None</span>
<span class="t" style="left:173.30px;top:884px;font-size:10.5px;line-height:10.5px;color:#cfcfcf;transform:scaleX(1.1179);">Left Grommet</span>
<span class="t" style="left:108.30px;top:900px;font-size:10.5px;line-height:10.5px;color:#cfcfcf;transform:scaleX(0.9761);">8</span>
<span class="t" style="left:760.60px;top:901px;font-size:10.5px;line-height:10.5px;color:#cfcfcf;transform:scaleX(0.9959);">None</span>
<span class="t" style="left:138.70px;top:900px;font-size:13px;line-height:13px;color:#d8d8d8;font-family:'Liberation Serif',serif;font-weight:700;transform:scaleX(1.0149);">T</span>
<span class="t" style="left:173.30px;top:901px;font-size:10.5px;line-height:10.5px;color:#cfcfcf;transform:scaleX(1.0787);">Right Panel 3</span>
<span class="t" style="left:108.30px;top:917px;font-size:10.5px;line-height:10.5px;color:#cfcfcf;transform:scaleX(0.9761);">9</span>
<span class="t" style="left:760.60px;top:918px;font-size:10.5px;line-height:10.5px;color:#cfcfcf;transform:scaleX(0.9959);">None</span>
<span class="t" style="left:138.70px;top:917px;font-size:13px;line-height:13px;color:#d8d8d8;font-family:'Liberation Serif',serif;font-weight:700;transform:scaleX(1.0149);">T</span>
<span class="t" style="left:173.30px;top:918px;font-size:10.5px;line-height:10.5px;color:#cfcfcf;transform:scaleX(1.0787);">Right Panel 2</span>
<span class="t" style="left:108.30px;top:934px;font-size:10.5px;line-height:10.5px;color:#cfcfcf;transform:scaleX(1.0018);">10</span>
<span class="t" style="left:760.60px;top:935px;font-size:10.5px;line-height:10.5px;color:#cfcfcf;transform:scaleX(0.9959);">None</span>
<span class="t" style="left:138.70px;top:934px;font-size:13px;line-height:13px;color:#d8d8d8;font-family:'Liberation Serif',serif;font-weight:700;transform:scaleX(1.0149);">T</span>
<span class="t" style="left:173.30px;top:935px;font-size:10.5px;line-height:10.5px;color:#cfcfcf;transform:scaleX(1.0823);">Right Panel</span>
<span class="t" style="left:108.30px;top:951px;font-size:10.5px;line-height:10.5px;color:#cfcfcf;transform:scaleX(1.0734);">11</span>
<span class="t" style="left:760.60px;top:952px;font-size:10.5px;line-height:10.5px;color:#cfcfcf;transform:scaleX(0.9959);">None</span>
<span class="t" style="left:138.70px;top:951px;font-size:13px;line-height:13px;color:#d8d8d8;font-family:'Liberation Serif',serif;font-weight:700;transform:scaleX(1.0149);">T</span>
<span class="t" style="left:173.30px;top:952px;font-size:10.5px;line-height:10.5px;color:#cfcfcf;transform:scaleX(1.0944);">Left Panel</span>
<span class="t" style="left:108.30px;top:968px;font-size:10.5px;line-height:10.5px;color:#cfcfcf;transform:scaleX(1.0018);">12</span>
<span class="t" style="left:760.60px;top:969px;font-size:10.5px;line-height:10.5px;color:#cfcfcf;transform:scaleX(0.9959);">None</span>
<span class="t" style="left:138.70px;top:968px;font-size:13px;line-height:13px;color:#d8d8d8;font-family:'Liberation Serif',serif;font-weight:700;transform:scaleX(1.0149);">T</span>
<span class="t" style="left:173.30px;top:969px;font-size:10.5px;line-height:10.5px;color:#cfcfcf;transform:scaleX(1.1199);">Use the guide bellow to place your texture.</span>
<span class="t" style="left:108.30px;top:985px;font-size:10.5px;line-height:10.5px;color:#cfcfcf;transform:scaleX(1.0018);">13</span>
<span class="t" style="left:760.60px;top:986px;font-size:10.5px;line-height:10.5px;color:#cfcfcf;transform:scaleX(0.9959);">None</span>
<span class="t" style="left:157.00px;top:986px;font-size:10.5px;line-height:10.5px;color:#cfcfcf;transform:scaleX(1.0519);">Guide BG</span>
<span class="t" style="left:643.00px;top:987px;font-size:11.5px;line-height:11.5px;color:#c2c2c2;transform:scaleX(1.0620);font-style:italic;">fx</span>
<span class="t" style="left:142.00px;top:783px;font-size:10.5px;line-height:10.5px;color:#cfcfcf;transform:scaleX(0.9709);">Scale</span>
<span class="t" style="left:621.80px;top:783px;font-size:10px;line-height:10px;color:#1a1a1a;transform:scaleX(0.9440);">70</span>
<span class="t" style="left:657.50px;top:782px;font-size:10.5px;line-height:10.5px;color:#3d7fdc;transform:scaleX(0.9635);">,80,0</span>
<span class="t" style="left:682.50px;top:782px;font-size:10.5px;line-height:10.5px;color:#b0b0b0;transform:scaleX(0.9104);">%</span>
<span class="t" style="left:933.50px;top:725px;font-size:10.3px;line-height:10.3px;color:#b4b4b4;transform:scaleX(1.0825);">00f</span>
<span class="t" style="left:992.25px;top:725px;font-size:10.3px;line-height:10.3px;color:#b4b4b4;transform:scaleX(1.0825);">10f</span>
<span class="t" style="left:1058.25px;top:725px;font-size:10.3px;line-height:10.3px;color:#b4b4b4;transform:scaleX(1.0825);">20f</span>
<span class="t" style="left:1116.75px;top:725px;font-size:10.3px;line-height:10.3px;color:#b4b4b4;transform:scaleX(1.0651);">01:00f</span>
<span class="t" style="left:1190.25px;top:725px;font-size:10.3px;line-height:10.3px;color:#b4b4b4;transform:scaleX(1.0825);">10f</span>
<span class="t" style="left:1256.25px;top:725px;font-size:10.3px;line-height:10.3px;color:#b4b4b4;transform:scaleX(1.0825);">20f</span>
<span class="t" style="left:1314.75px;top:725px;font-size:10.3px;line-height:10.3px;color:#b4b4b4;transform:scaleX(1.0651);">02:00f</span>
<span class="t" style="left:1388.25px;top:725px;font-size:10.3px;line-height:10.3px;color:#b4b4b4;transform:scaleX(1.0825);">10f</span>
<span class="t" style="left:1454.25px;top:725px;font-size:10.3px;line-height:10.3px;color:#b4b4b4;transform:scaleX(1.0825);">20f</span>
<span class="t" style="left:1512.75px;top:725px;font-size:10.3px;line-height:10.3px;color:#b4b4b4;transform:scaleX(1.0651);">03:00f</span>
<span class="t" style="left:1586.25px;top:725px;font-size:10.3px;line-height:10.3px;color:#b4b4b4;transform:scaleX(1.0825);">10f</span>
<span class="t" style="left:1652.25px;top:725px;font-size:10.3px;line-height:10.3px;color:#b4b4b4;transform:scaleX(1.0825);">20f</span>
<span class="t" style="left:1710.75px;top:725px;font-size:10.3px;line-height:10.3px;color:#b4b4b4;transform:scaleX(1.0651);">04:00f</span>
<span class="t" style="left:1784.25px;top:725px;font-size:10.3px;line-height:10.3px;color:#b4b4b4;transform:scaleX(1.0825);">10f</span>
<span class="t" style="left:1850.25px;top:725px;font-size:10.3px;line-height:10.3px;color:#b4b4b4;transform:scaleX(1.0825);">20f</span>
<span class="t" style="left:600.30px;top:1064px;font-size:10.3px;line-height:10.3px;color:#a8a8a8;transform:scaleX(1.0752);">Toggle Switches / Modes</span>
</div>
</body></html>
